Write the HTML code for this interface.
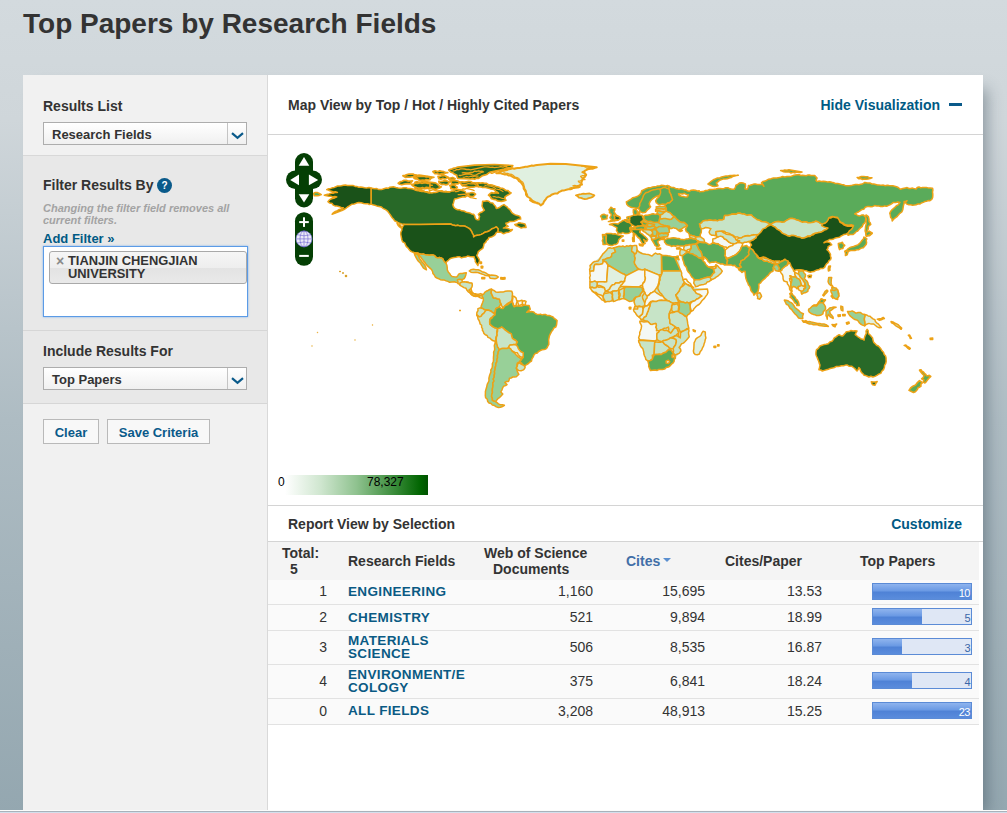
<!DOCTYPE html>
<html lang="en">
<head>
<meta charset="utf-8">
<title>Top Papers by Research Fields</title>
<style>
*{box-sizing:border-box;margin:0;padding:0}
html,body{width:1007px;height:813px;overflow:hidden}
body{font-family:"Liberation Sans",Arial,sans-serif;color:#333;position:relative;
background:linear-gradient(180deg,#d3dade 0px,#cfd6da 120px,#aebcc3 420px,#94a7b0 813px)}
.abs{position:absolute}
h1{position:absolute;left:23px;top:8px;font-size:28px;line-height:32px;font-weight:bold;color:#333;white-space:nowrap}
#panel{position:absolute;left:23px;top:75px;width:960px;height:735px;background:#fff;box-shadow:9px 9px 14px -5px rgba(50,70,82,.42)}
#side{position:absolute;left:0;top:0;width:245px;height:735px;background:#f1f1f1;border-right:1px solid #d9d9d9}
.sec{position:absolute;left:0;width:244px}
.lbl{position:absolute;left:20px;font-size:14px;font-weight:bold;color:#333;white-space:nowrap;line-height:16px}
.sel{position:absolute;left:20px;width:204px;height:23px;border:1px solid #adadad;background:linear-gradient(#fff,#f0f0f0);font-size:13px;font-weight:bold;color:#333;line-height:23px;padding-left:8px;white-space:nowrap}
.sel i{position:absolute;right:0;top:0;width:19px;height:21px;border-left:1px solid #c4c4c4}
.sel svg{position:absolute;right:2px;top:9px}
.btn{position:absolute;height:25px;border:1px solid #b9b9b9;background:#f8f8f8;font-size:13px;font-weight:bold;color:#0a5a8a;text-align:center;line-height:25px;white-space:nowrap}
.link{color:#005a84;font-weight:bold}
#bottomline{position:absolute;left:0;top:810px;width:1007px;height:1px;background:#fcfcfc}
#bottomstrip{position:absolute;left:0;top:811px;width:1007px;height:2px;background:linear-gradient(#a9b2ba 0,#a9b2ba 1px,#d3dfec 1px,#d3dfec 2px)}
.hl{position:absolute;height:1px;background:#d4d4d4}
.th{position:absolute;font-size:14px;font-weight:bold;color:#333;line-height:16px;white-space:nowrap}
.td{position:absolute;font-size:14px;color:#333;line-height:16px;white-space:nowrap}
.fld{position:absolute;font-size:13.5px;font-weight:bold;color:#0a5a84;line-height:13px;white-space:nowrap;letter-spacing:.35px}
.bar{position:absolute;width:100px;height:17px;border:1px solid #5b8bd6;background:#dfe7f5}
.bar b{position:absolute;left:0;top:0;height:100%;background:linear-gradient(#8fb4ee 0%,#6b9ae4 45%,#4f82d6 55%,#5a8cdc 100%)}
.bar span{position:absolute;right:1px;top:3px;font-size:11px;line-height:12px;letter-spacing:-.5px}
</style>
</head>
<body>
<h1>Top Papers by Research Fields</h1>
<div id="panel">
  <div id="side">
    <div class="sec" style="top:0;height:81px;background:#f1f1f1;border-bottom:1px solid #d8d8d8"></div>
    <div class="sec" style="top:81px;height:175px;background:#e8e8e8;border-bottom:1px solid #d6d6d6"></div>
    <div class="sec" style="top:256px;height:73px;background:#e8e8e8;border-bottom:1px solid #d6d6d6"></div>
    <div class="lbl" style="top:23px">Results List</div>
    <div class="sel" style="top:47px">Research Fields<i></i><svg width="13" height="8" viewBox="0 0 13 8"><path d="M1 1.2 L6.5 5.8 L12 1.2" fill="none" stroke="#0a5a8a" stroke-width="2.2"/></svg></div>
    <div class="lbl" style="top:102px">Filter Results By</div>
    <div class="abs" style="left:134px;top:103px;width:15px;height:15px;border-radius:50%;background:#0a5a8a;color:#fff;font-size:10px;font-weight:bold;text-align:center;line-height:15px">?</div>
    <div class="abs" style="left:20px;top:127px;font-size:11px;line-height:12px;font-style:italic;font-weight:bold;color:#a3a3a3;white-space:nowrap">Changing the filter field removes all<br>current filters.</div>
    <div class="lbl link" style="top:156px;font-size:13px">Add Filter »</div>
    <div class="abs" style="left:20px;top:171px;width:205px;height:71px;border:1px solid #5b9be6;background:#fff;box-shadow:0 0 2px #7db0ee"></div>
    <div class="abs" style="left:26px;top:176px;width:198px;height:33px;border:1px solid #a9a9a9;border-radius:3px;background:linear-gradient(#f6f6f6 0%,#eeeeee 50%,#e3e3e3 52%,#e9e9e9 100%)">
      <span class="abs" style="left:6px;top:2.5px;font-size:14px;font-weight:bold;color:#8a8a8a;line-height:13px">×</span>
      <span class="abs" style="left:18px;top:2px;font-size:12.9px;font-weight:bold;color:#333;line-height:13px;white-space:nowrap">TIANJIN CHENGJIAN<br>UNIVERSITY</span>
    </div>
    <div class="lbl" style="top:268px">Include Results For</div>
    <div class="sel" style="top:292px">Top Papers<i></i><svg width="13" height="8" viewBox="0 0 13 8"><path d="M1 1.2 L6.5 5.8 L12 1.2" fill="none" stroke="#0a5a8a" stroke-width="2.2"/></svg></div>
    <div class="btn" style="left:20px;top:344px;width:56px">Clear</div>
    <div class="btn" style="left:84px;top:344px;width:103px">Save Criteria</div>
  </div>
  <div id="main" class="abs" style="left:245px;top:0;width:715px;height:735px">
    <div class="lbl" style="left:20px;top:22px">Map View by Top / Hot / Highly Cited Papers</div>
    <div class="lbl link" style="left:auto;right:43px;top:22px">Hide Visualization</div>
    <div class="abs" style="left:681px;top:28px;width:13px;height:3px;background:#0a5a8a"></div>
    <div class="hl" style="left:0;top:59px;width:715px"></div>
    <div id="map" class="abs" style="left:0;top:60px;width:715px;height:370px"><!--MAP--><svg width="715" height="370" viewBox="0 0 715 370" style="position:absolute;left:0;top:0"><g stroke="#eda216" stroke-width="1.5" stroke-linejoin="round">
<polygon fill="#98d098" stroke="none" points="375.7,81.2 391.6,80.2 398.3,76.2 406.5,81.7 417.4,88.6 419.4,90.6 415.4,92.6 411.4,94.4 408.5,93.6 405.5,92.6 401.5,93.6 401.3,97.1 400.5,99.1 399.5,101.7 395.6,103.0 391.6,104.5 389.6,106.5 390.6,110.0 388.6,111.0 386.1,108.5 383.6,104.5 378.7,98.6 373.7,94.6 371.7,91.1 374.7,89.1 372.7,86.6 375.2,84.2"/>
<polygon fill="#c7e4c7" stroke="none" points="322.0,130.6 333.9,120.5 339.9,113.3 345.8,112.8 353.0,111.6 364.3,111.0 368.5,110.4 369.1,115.1 378.0,119.3 384.0,121.1 387.5,118.1 393.5,119.9 404.2,121.7 410.2,121.1 412.8,136.0 415.0,144.3 418.5,144.3 425.7,152.7 439.4,153.9 440.0,157.4 436.4,163.4 429.2,170.5 423.3,176.5 418.5,181.9 419.7,188.4 420.9,193.2 420.6,193.9 421.2,201.7 413.5,208.8 411.1,218.4 407.5,223.1 400.4,232.1 387.3,235.1 382.5,235.6 380.1,226.1 374.8,213.6 370.6,205.3 370.6,202.9 373.6,191.0 371.8,186.2 373.2,184.8 367.3,177.7 365.5,174.7 367.3,171.1 364.9,165.8 355.4,163.4 345.2,166.4 337.5,167.0 332.7,163.4 324.4,156.2 322.0,152.7"/>
<polygon fill="#e0f0e0" stroke-width="2.0" points="234.2,38.8 236.3,39.4 238.5,39.2 240.4,40.5 242.6,40.6 244.3,41.7 246.0,42.7 248.1,43.1 249.7,44.2 250.7,45.8 252.2,46.8 253.4,48.1 254.5,49.6 255.5,51.5 255.7,53.7 256.9,55.5 257.9,57.4 258.0,59.7 259.2,61.5 260.9,62.5 262.5,63.5 263.7,65.0 265.2,66.2 267.2,67.2 269.1,68.3 271.2,68.9 269.4,67.8 267.5,67.4 265.6,66.8 264.0,65.5 262.0,65.1 264.4,66.8 266.7,67.6 269.1,68.0 271.2,68.8 272.7,70.4 275.1,68.6 276.0,66.5 277.5,64.7 278.7,62.7 280.2,61.6 282.1,61.0 283.5,59.7 285.4,59.0 287.3,58.4 289.4,58.5 290.8,57.2 292.5,56.4 294.2,55.5 296.3,55.4 298.3,54.8 300.4,54.3 302.5,54.3 304.4,53.5 306.1,52.4 308.3,52.3 310.1,51.4 312.0,50.8 313.3,49.0 313.6,46.8 314.4,44.8 315.2,42.9 317.0,41.8 318.0,40.0 316.5,38.2 314.4,37.1 316.1,36.4 317.6,35.4 319.2,34.7 321.0,33.9 323.0,33.8 325.0,33.7 326.9,32.9 328.7,32.3 312.0,30.5 297.8,29.1 282.3,28.7 269.1,29.9 267.4,30.2 265.6,30.7 263.7,30.5 262.0,31.1 259.2,31.7 257.3,31.8 255.4,32.2 253.6,32.6 251.7,32.9 249.7,32.9 247.9,33.2 246.2,33.8 244.3,33.2 242.6,34.1 240.7,34.2 238.9,34.7 237.1,35.1 235.4,35.8 233.5,35.9 231.9,37.2 230.2,38.0 228.3,38.2 230.3,38.2 232.3,38.1"/>
<polyline fill="none" stroke-width="1.3" points="315.0,36.4 317.0,37.9 318.6,39.8 316.6,40.4 314.6,40.6 312.6,41.4 313.8,42.9 315.6,43.6 317.0,44.6 314.7,44.6 312.6,45.9 310.3,46.2 311.4,47.7 313.4,48.2 314.4,49.8 312.5,49.6 310.6,50.4 308.8,50.8 306.8,50.5 304.9,50.8 306.7,51.0 308.5,51.2 310.2,51.9 312.0,52.2 310.0,52.9 307.8,52.8 305.7,53.4 303.4,52.7 301.3,53.4"/>
<polyline fill="none" stroke-width="1.2" points="313.2,31.1 315.5,30.9 317.5,32.2 319.7,32.1 321.9,32.1 324.0,32.9 322.0,33.1 320.0,33.6 318.0,34.1"/>
<polyline fill="none" stroke-width="1.2" points="235.4,37.6 237.5,38.1 239.6,38.3 241.6,39.2 243.8,39.4 245.5,40.6 247.1,42.0 249.1,42.6 250.9,43.6 252.0,45.0 253.4,46.2 254.8,47.3 255.7,49.0 256.1,51.3 256.8,53.5 258.1,55.5 258.2,57.4 259.2,59.1 259.9,60.9"/>
<polygon fill="#c7e4c7" stroke-width="1.8" points="307.9,60.3 309.7,60.0 311.4,59.3 313.2,59.1 315.3,58.7 317.4,58.9 319.5,58.7 321.6,58.5 323.2,59.0 324.7,59.7 326.4,60.3 324.8,61.9 322.8,62.7 320.8,63.2 318.8,63.8 316.8,64.1 314.9,63.6 312.9,62.8 310.9,62.7 309.6,61.2"/>
<polygon fill="#286928" points="103.0,53.0 104.9,53.4 106.8,53.8 108.7,53.6 111.0,54.6 113.5,54.6 115.9,53.7 118.3,53.1 120.2,53.3 121.8,52.2 123.6,51.9 125.4,51.8 127.8,52.5 130.2,53.0 132.2,53.3 134.2,53.1 136.1,52.7 138.2,52.7 140.1,53.6 142.1,53.6 143.9,53.8 145.7,54.3 147.4,55.1 149.2,55.4 151.0,55.9 152.8,56.2 154.7,55.7 156.4,56.2 154.2,56.6 152.0,56.1 153.8,56.5 155.6,56.4 157.3,56.8 159.1,56.7 161.5,57.5 163.9,57.9 165.7,57.5 167.6,57.5 169.4,57.1 171.1,56.1 173.1,56.5 175.2,56.8 177.3,57.0 179.4,56.7 181.5,57.0 183.4,56.1 185.4,56.1 187.8,54.3 190.1,54.6 192.5,54.9 194.1,55.6 195.8,55.9 197.3,56.7 198.1,58.5 199.7,59.7 198.5,61.0 197.3,62.1 195.2,61.8 193.3,62.3 191.3,62.7 189.0,63.5 186.6,63.9 186.0,65.9 185.5,67.9 184.8,69.8 185.4,71.5 186.3,72.9 187.8,74.0 189.7,74.8 191.8,74.8 193.7,75.8 195.8,75.9 197.7,77.0 199.7,77.6 201.7,77.9 203.6,78.9 205.6,79.3 206.7,80.8 207.1,82.6 208.0,84.1 209.4,84.8 211.0,84.7 210.9,83.2 211.6,81.7 210.4,79.3 212.0,77.8 214.0,77.0 216.4,75.2 215.0,73.2 214.0,71.0 214.4,68.6 214.6,66.2 216.7,66.3 218.7,65.7 220.8,66.2 222.5,67.7 224.7,68.0 226.0,69.7 227.5,71.3 228.3,73.4 230.1,73.0 231.8,72.2 233.8,70.7 236.0,69.6 237.5,70.8 239.1,71.8 240.2,73.4 241.8,74.4 242.8,76.0 243.8,77.6 245.5,78.8 247.3,79.9 249.4,80.5 251.5,81.1 252.5,82.5 252.7,84.1 250.5,84.2 248.5,85.3 246.2,86.2 243.8,86.5 241.6,86.6 239.8,87.8 237.8,88.3 238.6,90.1 240.2,91.3 238.4,91.4 236.9,92.3 235.4,93.1 237.3,92.9 239.1,93.2 240.8,93.9 242.5,94.8 244.4,94.6 242.8,96.2 240.8,97.2 238.3,97.5 236.0,98.7 234.4,98.2 233.0,97.2 230.1,97.2 229.9,95.4 230.1,93.7 228.3,91.9 225.9,93.1 224.1,93.7 222.6,94.8 221.1,96.0 219.1,96.7 217.0,97.2 215.2,98.4 213.3,99.4 211.3,100.0 209.2,100.2 207.2,100.7 205.6,102.0 205.5,100.1 204.4,98.4 203.5,96.2 202.1,94.2 200.6,93.1 198.9,92.2 197.3,91.3 195.4,91.0 193.5,90.9 191.6,90.9 189.7,90.3 187.8,90.7 186.1,90.2 184.5,90.0 183.0,89.1 152.0,89.5 136.1,89.3 133.7,88.9 131.4,88.2 129.8,87.4 128.2,86.5 126.6,85.8 125.6,84.1 124.1,82.7 123.0,81.0 122.0,79.4 120.8,77.9 119.8,76.3 118.3,75.1 116.6,74.2 114.9,73.3 113.5,72.1 111.1,71.5 108.7,70.9 106.8,70.2 104.9,69.7 103.0,69.1"/>
<polygon fill="#286928" points="246.7,89.5 249.0,89.0 250.9,87.7 252.9,88.1 254.9,88.4 256.9,88.9 257.6,90.6 258.1,92.5 255.6,92.2 253.3,93.1 251.5,92.1 249.7,91.3 248.0,90.8"/>
<polygon fill="#286928" stroke-width="1.7" points="180.8,35.1 182.5,34.3 184.3,33.9 186.1,33.1 187.9,32.8 189.7,32.1 206.6,30.1 226.4,29.5 244.8,30.5 243.9,32.0 242.3,32.9 240.3,32.9 238.3,33.2 236.4,34.1 222.5,37.1 220.5,38.1 218.7,39.5 216.5,40.1 214.3,40.8 212.4,42.1 210.6,43.4 208.5,43.2 206.6,44.2 204.6,43.6 202.6,44.0 189.7,43.4 189.1,41.8 188.7,40.1 186.6,39.3 184.9,37.8 182.8,37.1"/>
<polyline fill="none" stroke-width="1.3" points="184.7,35.9 186.7,35.6 188.6,34.7 190.7,34.7 192.6,33.9 194.7,33.9 196.7,34.0 198.6,34.5 200.7,34.3 202.6,34.9 216.5,31.9 218.5,31.9 220.5,32.0 222.5,32.4 224.5,32.2 226.4,32.6 228.4,32.4 230.6,32.2 232.8,31.7 235.0,32.2 237.1,31.4 239.4,31.7"/>
<polyline fill="none" stroke-width="1.3" points="190.7,40.4 192.7,40.5 194.7,39.8 196.6,39.3 198.6,39.0 200.6,38.9 202.7,39.1 204.5,40.2 206.6,40.4 208.4,39.8 210.1,38.7 211.9,38.2 213.6,37.3 215.5,36.9 213.9,36.2 212.2,36.3 210.6,35.9 208.6,36.5 206.5,36.1 204.7,37.5 202.6,37.4 200.4,38.0 198.2,37.9 195.9,37.6 193.7,37.9"/>
<polyline fill="none" stroke-width="1.1" points="194.7,42.3 196.7,42.1 198.6,41.4 200.7,42.0 202.6,41.3 204.6,41.7 206.6,41.2 208.6,41.0 210.6,41.3"/>
<polyline fill="none" stroke-width="1.2" points="222.5,38.4 224.5,38.3 226.4,37.4 228.4,36.9 230.5,37.0 232.4,36.4 234.3,36.0 236.2,35.8 238.1,35.6 239.9,34.9"/>
<polygon fill="#286928" stroke-width="1.7" points="147.0,41.1 149.0,40.5 150.9,40.2 153.0,40.4 165.9,42.3 163.7,42.9 161.9,44.3 159.7,44.2 157.5,44.7 155.3,44.3 153.2,44.6 151.0,44.6 149.1,43.8 147.0,43.8"/>
<polygon fill="#286928" stroke-width="1.7" points="164.9,36.6 167.1,35.8 169.6,36.6 171.8,35.9 173.8,36.3 175.8,36.7 177.7,37.5 179.8,37.7 177.6,38.0 175.8,39.1 173.6,38.8 171.3,39.3 169.1,38.6 166.9,38.7"/>
<polygon fill="#286928" stroke-width="1.7" points="170.0,41.3 172.3,41.3 174.5,40.5 176.8,40.7 178.6,41.4 180.3,42.3 178.6,43.4 176.8,44.0 174.8,43.4 172.8,44.2 170.8,43.6"/>
<polygon fill="#286928" stroke-width="1.6" points="180.3,43.0 182.5,43.1 184.7,42.4 187.2,43.6 185.9,44.6 184.2,44.6 182.5,44.9 180.8,44.3"/>
<polygon fill="#286928" stroke-width="1.7" points="170.8,46.3 172.9,46.5 174.8,46.1 176.8,45.6 179.2,46.0 181.3,47.3 179.8,49.4 177.8,49.9 175.8,49.2 173.8,49.6 171.3,48.3"/>
<polygon fill="#286928" stroke-width="1.7" points="147.0,47.3 148.9,46.6 151.0,47.3 153.0,46.9 154.9,46.3 166.9,47.8 168.6,48.6 170.1,49.8 171.4,51.2 173.3,51.8 171.8,52.9 170.1,53.5 168.4,54.3 166.5,54.1 164.6,53.4 162.7,53.5 160.8,53.2 158.9,53.3 156.9,53.6 154.9,53.7 153.0,54.2 151.0,54.3 148.9,54.0 147.0,53.3 147.0,51.3 146.6,49.3"/>
<polyline fill="none" stroke-width="1.2" points="148.0,50.8 149.9,51.5 152.0,51.3 153.9,51.8 155.9,51.6 157.6,50.8 159.6,51.4 161.2,50.3 163.0,50.1 164.9,50.3"/>
<polygon fill="#286928" stroke-width="1.7" points="181.8,46.0 183.7,45.8 185.7,45.5 187.7,45.6 189.9,46.1 191.9,47.3 189.7,49.0 187.7,48.8 185.7,49.4 183.7,48.8 183.0,47.2"/>
<polygon fill="#286928" stroke-width="1.7" points="181.8,50.3 184.2,49.9 186.7,49.8 187.7,51.3 189.2,52.3 188.1,53.4 186.7,54.3 184.7,53.9 182.8,53.6 182.7,51.8"/>
<polygon fill="#286928" stroke-width="1.7" points="191.7,47.0 193.9,46.8 196.2,47.2 198.4,46.8 200.6,46.4 202.7,46.5 204.5,47.7 206.5,47.8 208.6,48.0 210.6,48.3 211.0,49.9 210.6,51.6 208.6,51.3 206.6,51.8 204.6,52.2 202.6,52.0 200.6,52.1 198.7,51.4 196.7,51.0 194.7,51.0 193.1,49.1"/>
<polyline fill="none" stroke-width="1.2" points="193.7,49.3 195.9,49.3 198.2,49.4 200.4,48.5 202.6,48.8 204.4,48.9 206.2,48.8 207.8,50.0 209.6,49.8"/>
<polygon fill="#286928" stroke-width="1.7" points="208.6,48.0 210.6,47.8 212.5,48.1 214.5,47.8 216.5,48.3 218.6,48.4 220.4,49.7 222.5,49.9 224.5,50.2 226.4,50.8 228.4,51.7 230.5,52.0 232.3,53.1 234.4,53.4 236.4,54.3 237.9,55.5 240.0,55.7 241.4,57.1 243.1,57.9 241.3,59.2 239.4,60.2 238.0,61.1 236.9,62.2 236.9,63.8 237.9,65.2 235.8,65.9 233.6,66.3 231.4,66.2 229.4,65.8 227.5,64.6 225.5,64.3 223.5,63.7 222.3,61.7 220.5,60.2 221.9,58.8 223.5,57.7 225.8,58.1 228.1,57.6 230.4,58.2 229.1,57.0 227.5,56.2 226.4,54.8 224.5,54.1 222.5,53.8 220.5,53.3 218.5,52.8 216.6,52.2 214.5,52.5 212.6,51.8 210.6,51.6 209.7,49.7"/>
<polyline fill="none" stroke-width="1.1" points="216.5,50.3 218.5,50.8 220.6,51.0 222.6,51.3 224.6,51.8 226.4,52.8 228.0,54.0 230.0,54.4 232.0,54.7 233.7,55.8 235.4,56.7"/>
<polyline fill="none" stroke-width="1.1" points="224.5,61.7 226.5,61.5 228.4,62.3 230.5,62.0 232.4,62.7 234.3,63.4 236.4,63.7"/>
<polygon fill="#286928" stroke-width="1.6" points="199.6,58.2 201.9,58.0 204.1,57.5 206.0,58.0 207.6,59.2 205.6,61.2 203.3,61.5 201.1,60.9 200.8,59.3"/>
<polyline fill="none" stroke-width="1.3" points="186.7,56.7 188.6,56.6 190.3,56.2 191.9,55.1 193.7,54.8 195.2,53.9 197.1,54.1 198.6,53.3 200.6,53.8 202.6,54.3 204.6,54.9 206.6,55.8"/>
<polyline fill="none" stroke-width="1.3" points="189.7,59.7 192.0,59.7 194.3,59.4 196.6,59.2 198.5,60.6 200.7,61.4 202.6,62.7 204.6,62.8 206.6,63.3 208.6,63.7"/>
<polyline fill="none" stroke-width="1.2" points="147.0,55.0 148.9,55.7 151.0,55.3 153.0,55.4 154.9,55.8 156.6,56.6 158.3,57.3 160.1,57.9 161.9,58.2 161.8,56.4 160.9,54.8 163.0,55.4 165.3,54.6 167.4,55.7 169.6,55.8 171.8,55.8 173.9,55.6 175.8,56.6 177.8,56.0 179.8,56.9 181.8,56.9"/>
<polygon fill="#286928" points="129.0,88.2 130.7,89.4 132.6,90.3 133.3,92.0 134.7,93.2 133.0,93.0 131.6,92.0 130.0,90.3"/>
<polygon fill="#286928" stroke-width="1.7" points="134.9,40.7 137.1,40.4 139.1,39.6 141.1,39.0 143.3,39.1 145.1,39.1 146.8,39.9 148.6,40.2 146.9,40.9 145.2,41.6 143.3,41.9 141.3,42.1 139.3,42.1 137.3,42.3"/>
<polygon fill="#286928" stroke-width="1.7" points="130.2,48.2 132.0,46.9 134.2,46.3 136.1,45.3 138.2,45.4 140.3,46.1 142.4,46.0 144.5,45.8 143.3,47.3 142.1,48.8 140.0,48.7 137.9,48.8 135.8,49.2 133.8,49.8 131.8,49.3"/>
<polygon fill="#286928" stroke-width="1.7" points="145.7,42.9 147.8,42.5 149.8,41.7 151.9,41.5 154.0,41.1 156.0,41.3 158.0,41.9 160.0,41.7 162.0,42.3 162.0,44.7 160.2,45.0 158.3,44.6 156.5,45.3 154.7,45.2 152.8,45.3 150.9,45.0 149.3,43.8 147.6,43.2"/>
<polygon fill="#286928" stroke-width="1.7" points="143.3,49.4 145.4,49.3 147.4,48.2 149.6,48.5 151.6,47.6 153.7,48.3 155.8,47.9 157.9,47.9 160.0,48.3 162.0,48.8 161.9,50.7 162.0,52.7 160.2,52.5 158.3,52.3 156.5,53.4 154.6,52.5 152.8,53.0 150.7,53.1 148.8,52.6 146.9,51.8 144.9,50.9"/>
<polygon fill="#1a5219" points="136.1,89.3 152.0,89.5 183.0,89.1 184.5,90.0 186.1,90.2 187.8,90.7 189.7,90.3 191.6,90.9 193.5,90.9 195.4,91.0 197.3,91.3 198.9,92.2 200.6,93.1 202.1,94.2 203.5,96.2 204.4,98.4 205.5,100.1 205.6,102.0 207.2,100.7 209.2,100.2 211.3,100.0 213.3,99.4 215.2,98.4 217.0,97.2 219.1,96.7 221.1,96.0 222.6,94.8 224.1,93.7 225.9,93.1 228.3,91.9 230.1,93.7 229.9,95.4 230.1,97.2 229.9,96.7 228.1,97.9 227.2,99.6 225.7,100.8 224.2,101.7 222.5,102.2 220.9,102.6 220.1,104.4 218.5,105.6 217.7,107.4 216.1,108.6 215.6,111.0 214.9,113.4 213.2,114.4 211.6,115.6 210.2,116.9 209.8,118.7 208.8,120.3 209.9,122.2 211.1,124.1 211.6,126.2 210.4,128.3 209.9,130.6 208.6,128.7 207.3,126.7 207.3,125.0 206.5,123.4 206.1,121.7 204.2,121.7 201.8,121.6 199.5,121.1 197.6,122.1 195.4,122.2 193.5,122.9 191.9,121.8 189.9,121.7 187.9,122.2 186.0,122.5 184.0,122.9 182.0,123.8 180.4,125.3 178.8,126.5 178.0,128.3 176.7,127.1 175.6,125.6 174.8,123.9 173.2,122.9 171.5,122.6 169.7,122.9 167.9,122.2 166.7,120.6 164.9,119.9 163.1,119.9 161.3,120.3 159.5,120.1 157.8,119.9 155.6,119.1 153.4,119.2 151.2,118.7 149.5,118.0 147.6,117.9 145.8,117.5 144.0,116.9 142.4,116.0 141.1,114.6 139.9,112.9 138.4,111.6 137.5,109.8 136.7,107.9 134.7,106.9 133.9,105.0 133.5,103.0 133.1,101.1 132.7,99.1 132.9,97.0 133.8,95.2 133.9,93.1 134.9,91.1 136.3,89.3"/>
<polygon fill="#1a5219" points="103.0,53.0 100.9,52.5 98.7,52.9 96.5,52.8 94.4,52.2 92.7,51.9 90.8,52.3 89.1,51.6 87.3,51.4 85.4,50.6 83.3,50.6 81.3,50.6 79.3,50.4 77.4,50.0 75.4,50.3 73.4,50.8 71.4,51.1 69.4,51.0 67.9,51.8 66.3,52.4 64.6,52.7 62.7,53.4 60.6,53.7 58.7,54.6 60.3,55.1 61.8,55.8 63.4,56.2 65.4,57.0 67.5,56.7 69.4,57.4 67.3,57.4 65.2,58.2 63.1,58.3 61.1,59.0 58.7,59.6 56.3,60.2 58.7,60.8 61.1,61.3 63.0,61.3 64.9,62.1 66.9,61.6 68.8,61.9 66.7,62.9 64.4,63.5 62.3,64.3 61.0,65.4 59.9,66.7 61.7,68.1 64.1,68.5 65.2,70.1 67.0,70.9 68.8,71.1 70.6,71.4 72.4,72.1 73.8,72.8 75.4,72.7 73.6,74.1 71.3,74.5 69.4,75.7 67.4,76.5 65.6,77.6 64.1,79.2 66.0,78.6 68.0,77.9 69.9,77.1 71.8,76.2 73.9,75.5 75.9,74.5 77.8,73.3 79.5,72.0 81.3,70.9 83.7,69.3 86.2,69.0 88.5,68.1 90.8,67.6 93.2,67.7 95.6,68.5 98.0,68.8 99.7,68.7 101.3,69.5 103.0,69.1"/>
<polygon fill="#5aab5a" points="45.6,58.4 47.2,57.5 49.1,57.4 51.3,58.4 53.3,59.6 51.3,60.4 49.1,60.8 46.2,60.8"/>
<polygon fill="#98d098" points="145.8,117.5 147.6,117.9 149.5,118.0 151.2,118.7 153.4,119.2 155.6,119.1 157.8,119.9 159.5,120.1 161.3,120.3 163.1,119.9 164.9,119.9 166.7,120.6 167.9,122.2 169.7,122.9 171.5,122.6 173.2,122.9 174.8,123.9 175.6,125.6 176.7,127.1 178.0,128.3 178.9,130.3 179.2,132.4 179.3,134.9 180.4,137.2 181.7,138.5 182.6,140.2 184.0,141.4 186.3,141.8 188.7,142.0 189.8,140.6 190.7,139.2 192.3,138.4 194.3,138.5 196.3,138.0 198.3,137.8 197.8,139.9 197.1,142.0 196.2,143.5 194.7,144.4 192.3,144.9 190.9,146.3 189.9,147.9 188.1,147.4 186.4,146.7 183.9,146.9 181.6,147.3 179.9,146.4 178.1,145.9 176.4,145.1 174.4,144.9 172.4,144.7 170.7,143.7 168.9,143.0 167.3,142.0 166.3,140.1 164.9,138.4 164.6,136.6 163.8,135.0 162.5,133.6 160.9,132.1 159.2,130.6 157.8,128.9 156.7,127.2 155.3,125.7 154.2,124.1 153.1,122.6 151.9,121.2 150.6,119.9 149.3,118.6 147.3,118.6"/>
<polygon fill="#98d098" points="146.4,118.1 147.8,119.0 149.4,119.3 150.7,121.2 151.5,123.5 153.0,125.3 154.1,127.1 155.8,128.6 156.9,130.4 157.8,132.4 158.4,134.8 156.7,133.9 155.3,132.8 154.2,131.2 153.1,129.5 152.2,127.8 150.6,126.5 149.5,125.0 148.5,123.4 147.6,121.7 146.7,120.0"/>
<polygon fill="#c7e4c7" points="189.3,144.9 191.4,144.3 193.5,144.4 194.2,145.8 194.7,147.3 194.1,148.8 193.5,150.3 191.7,149.4 189.9,148.5 190.0,146.7"/>
<polygon fill="#e0f0e0" points="194.7,147.3 196.7,147.8 198.7,146.9 200.6,147.3 202.4,148.3 204.2,149.1 203.4,151.5 203.0,153.9 203.6,155.7 204.2,157.5 202.3,157.1 200.6,156.3 199.1,154.7 198.3,152.7 196.8,151.6 195.1,151.1 193.5,150.3 194.1,148.8"/>
<polygon fill="#c7e4c7" points="204.2,157.5 205.7,158.4 207.3,158.8 209.0,159.2 210.8,159.2 212.6,158.6 214.6,159.4 216.1,161.0 215.2,162.5 213.8,163.4 211.7,162.6 210.2,161.0 207.8,161.4 205.4,161.0 203.6,159.7 202.0,158.0 200.6,156.3 202.3,157.1"/>
<polygon fill="#c7e4c7" points="201.2,136.0 203.1,134.7 205.4,134.2 207.8,134.7 210.2,134.8 212.2,135.5 214.0,136.7 216.1,137.2 218.1,138.2 220.0,139.5 222.1,140.2 219.7,140.8 217.6,140.6 215.8,139.6 213.8,139.0 211.8,138.3 209.9,137.5 207.8,137.2 205.4,137.6 203.0,137.2"/>
<polygon fill="#c7e4c7" points="220.9,140.8 223.2,140.1 225.7,140.2 227.4,140.4 229.0,141.0 230.4,142.0 228.8,143.2 226.9,143.8 224.5,143.4 222.1,143.2"/>
<polygon fill="#c7e4c7" points="232.8,142.6 234.9,142.8 237.0,142.6 237.0,143.9 234.9,144.3 232.8,143.9"/>
<polygon fill="#c7e4c7" points="213.8,142.6 216.7,142.6 216.7,143.8 213.8,143.8"/>
<polygon fill="#c7e4c7" points="212.0,127.1 213.5,127.1 213.5,128.6 212.0,128.6"/>
<polygon fill="#c7e4c7" points="213.2,131.2 214.7,131.2 214.7,133.0 213.2,133.0"/>
<polygon fill="#1a5219" stroke-width="0.9" points="71.6,136.1 72.4,136.1 72.4,136.9 71.6,136.9"/>
<polygon fill="#1a5219" stroke-width="0.9" points="74.6,137.6 75.4,137.6 75.4,138.4 74.6,138.4"/>
<polygon fill="#1a5219" stroke-width="1.0" points="77.3,140.3 78.7,140.3 78.7,141.7 77.3,141.7"/>
<polygon fill="#c7e4c7" stroke-width="0.7" points="49.2,197.2 49.8,197.2 49.8,197.8 49.2,197.8"/>
<polygon fill="#c7e4c7" stroke-width="0.7" points="104.2,189.7 104.8,189.7 104.8,190.3 104.2,190.3"/>
<polygon fill="#c7e4c7" stroke-width="0.6" points="86.7,204.7 87.3,204.7 87.3,205.3 86.7,205.3"/>
<polygon fill="#c7e4c7" stroke-width="0.9" points="191.5,175.0 192.5,175.0 192.5,176.0 191.5,176.0"/>
<polygon fill="#c7e4c7" stroke-width="0.6" points="43.7,210.7 44.3,210.7 44.3,211.3 43.7,211.3"/>
<polygon fill="#98d098" points="214.1,159.9 215.7,159.1 216.7,157.4 218.2,156.3 220.0,155.5 221.7,154.5 223.6,153.9 223.4,156.0 223.0,158.1 224.1,159.5 224.5,161.3 225.4,162.9 227.4,163.0 229.3,163.8 231.3,164.1 232.0,165.6 232.1,167.4 233.1,168.8 232.0,170.2 231.3,171.8 229.6,172.8 227.8,173.6 227.3,175.6 226.9,177.5 227.1,179.6 226.0,178.1 224.0,177.6 223.0,176.0 220.6,175.2 218.2,174.8 216.3,174.7 214.7,173.5 212.9,173.0 213.2,171.1 213.9,169.4 214.6,167.6 215.4,165.3 215.2,162.9 214.1,161.6"/>
<polygon fill="#c7e4c7" points="223.6,154.5 225.8,155.4 227.8,156.9 230.1,157.3 232.5,156.9 235.0,157.1 237.3,156.3 239.5,156.0 241.7,156.1 243.8,156.3 244.5,158.4 244.4,160.5 244.2,162.5 244.0,164.5 243.2,166.4 240.9,167.6 238.9,168.9 237.3,170.6 236.0,172.0 234.9,173.6 234.6,171.9 233.4,170.5 233.1,168.8 232.1,167.4 232.0,165.6 231.3,164.1 229.3,163.8 227.4,163.0 225.4,162.9 224.7,161.3 224.0,159.7 223.2,158.1 223.3,156.3"/>
<polygon fill="#f4f8f4" points="244.4,161.1 246.4,161.6 248.0,162.9 248.5,164.7 249.2,166.4 248.4,168.5 248.0,170.6 245.6,171.2 245.4,169.0 244.4,167.1 244.5,165.1 244.9,163.1"/>
<polygon fill="#f4f8f4" points="249.2,165.9 251.6,166.0 254.0,165.3 254.7,167.3 254.6,169.4 252.5,170.0 250.4,170.6 250.1,168.2"/>
<polygon fill="#f4f8f4" points="254.6,165.9 256.4,165.7 258.1,166.4 257.4,168.2 257.5,170.0 255.2,170.3 254.3,168.1"/>
<polygon fill="#c7e4c7" points="209.9,173.6 211.3,173.1 212.9,173.0 214.7,173.5 216.3,174.7 218.2,174.8 217.2,176.7 215.8,178.4 214.3,179.4 213.3,181.1 211.7,181.9 210.1,180.8 208.7,179.6 208.9,177.5 210.0,175.7"/>
<polygon fill="#c7e4c7" points="208.7,180.1 210.0,181.3 211.7,181.9 213.3,181.1 214.3,179.4 215.8,178.4 217.0,176.6 218.4,175.0 220.8,175.2 223.0,176.2 224.5,177.3 225.9,178.4 227.1,179.8 225.7,180.7 224.3,181.9 222.8,182.8 221.8,184.3 221.6,186.7 221.8,189.1 223.3,190.4 224.8,191.7 226.6,192.7 228.2,192.9 229.5,193.9 228.8,196.2 228.9,198.6 228.9,200.4 227.9,202.1 227.8,203.9 227.8,205.8 227.4,206.3 225.2,205.8 223.2,204.5 221.9,203.1 220.0,202.4 219.1,200.5 217.3,199.8 215.9,198.4 215.3,196.6 214.3,195.0 214.6,193.9 213.6,192.3 213.6,190.3 212.1,189.0 211.7,187.2 211.1,185.5 210.0,183.8 209.7,181.9"/>
<polygon fill="#5aab5a" points="227.8,173.6 229.6,172.8 231.3,171.8 232.9,173.2 234.9,173.6 236.0,172.0 237.3,170.6 239.5,169.8 241.3,168.3 243.2,167.1 244.4,167.6 245.0,169.9 246.2,171.8 248.2,170.9 250.4,171.0 252.2,171.2 254.0,171.1 255.7,170.0 257.5,170.3 259.3,170.4 261.1,170.6 261.7,172.4 262.3,174.2 260.5,175.6 258.7,177.2 261.1,176.7 263.5,176.6 265.5,176.9 267.0,178.3 268.7,179.2 270.6,179.6 272.4,179.1 274.2,179.9 276.0,179.4 277.8,179.6 279.4,180.6 281.4,180.5 283.2,181.3 285.0,181.9 286.2,183.3 287.7,184.4 289.1,185.5 288.8,187.9 288.5,190.3 287.7,192.1 285.8,193.0 285.0,194.8 283.8,196.2 282.9,197.8 282.1,199.4 281.4,201.0 281.0,203.1 280.6,205.1 280.8,207.3 280.8,209.4 279.9,211.0 279.1,212.7 277.8,214.1 276.0,214.6 274.1,214.8 272.3,215.6 270.6,216.5 269.3,218.0 267.2,218.5 265.9,220.1 265.1,222.1 263.9,223.9 263.5,226.0 261.8,227.1 260.4,228.5 258.7,229.6 256.4,230.8 254.6,229.8 253.5,228.0 251.6,227.2 252.6,225.5 253.7,223.8 255.2,222.5 255.2,220.1 255.2,217.7 253.1,216.9 251.6,215.3 250.3,214.2 249.3,212.8 248.0,211.7 248.3,209.3 249.2,207.0 247.8,205.5 246.1,204.5 244.4,203.4 243.7,201.0 243.2,198.6 241.0,197.9 239.1,196.4 237.3,195.1 235.6,193.5 233.7,192.1 231.7,193.1 229.5,193.9 228.2,192.9 226.6,192.7 224.8,191.7 223.3,190.4 221.8,189.1 221.8,186.7 222.0,184.3 224.0,183.1 225.2,181.1 227.1,179.8 227.0,177.7 227.5,175.7"/>
<polygon fill="#c7e4c7" points="229.5,193.9 231.7,193.1 233.7,192.1 235.6,193.5 237.3,195.1 239.1,196.4 241.0,197.9 243.2,198.6 243.7,201.0 244.4,203.4 246.1,204.5 247.8,205.5 249.2,207.0 248.2,208.3 248.0,209.9 246.0,209.6 244.0,209.9 242.1,209.9 240.8,211.7 239.7,213.5 237.7,213.4 235.7,213.8 233.7,213.5 231.3,215.3 230.4,213.4 229.2,211.5 228.9,209.4 228.6,207.6 228.3,205.8 228.3,204.0 228.4,202.2 229.2,200.2 229.0,198.0 229.6,196.0"/>
<polygon fill="#e0f0e0" points="242.1,209.9 244.0,209.9 246.0,209.6 248.0,209.9 249.6,211.5 250.3,213.6 251.6,215.3 253.1,216.9 255.2,217.7 255.2,220.1 255.2,222.5 253.3,222.1 251.6,221.3 250.3,219.6 249.2,217.7 247.0,217.4 245.1,216.3 243.2,215.3 241.9,214.3 240.9,212.9 241.0,211.2"/>
<polygon fill="#98d098" points="227.4,206.3 228.1,208.5 229.2,210.5 229.5,212.2 230.8,213.5 231.0,215.3 230.2,217.0 230.0,218.8 229.4,220.5 229.6,222.4 229.0,224.5 228.9,226.6 227.9,228.6 227.8,230.8 227.2,232.6 227.1,234.6 226.4,236.4 226.7,238.4 226.2,240.3 226.2,242.2 225.2,244.0 226.0,246.1 224.8,247.9 225.0,249.8 224.9,251.7 224.4,253.6 224.3,255.5 224.5,257.5 223.8,259.4 223.6,261.4 224.4,263.3 224.4,265.3 226.6,266.2 228.7,267.3 230.4,268.9 232.3,269.8 234.4,269.8 236.4,270.3 234.5,271.5 232.5,272.2 230.4,272.5 228.3,271.9 226.5,270.6 224.4,270.1 223.1,268.5 221.0,268.0 219.7,266.5 219.3,264.3 217.6,262.7 217.3,260.5 217.4,258.5 217.4,256.5 217.9,254.6 218.5,252.8 218.9,251.0 219.3,249.1 220.3,247.4 221.0,245.4 220.9,243.2 221.4,241.1 222.1,239.1 222.9,237.1 222.8,234.8 224.1,232.9 224.4,230.8 224.3,228.8 225.1,227.0 225.5,225.1 225.4,223.1 225.6,221.2 225.7,219.1 225.6,217.0 226.6,215.0 226.6,212.9 226.3,210.6 226.9,208.5"/>
<polygon fill="#98d098" points="231.0,215.3 232.3,214.1 234.0,213.5 235.8,213.3 237.6,213.4 239.4,213.4 241.1,212.9 242.8,214.0 243.8,215.9 245.4,217.1 247.0,218.5 248.3,220.0 250.0,221.6 251.8,223.0 254.2,223.6 252.8,225.1 251.4,226.8 249.5,227.8 249.0,229.5 249.1,231.4 248.3,233.1 249.0,235.3 249.7,237.4 250.9,239.3 249.6,240.5 248.3,241.7 246.5,241.9 244.7,242.0 243.1,243.0 241.4,243.3 241.1,244.9 240.5,246.5 238.6,246.5 236.9,247.4 239.0,249.6 237.6,250.5 235.9,251.1 234.8,252.4 234.0,254.8 232.8,257.0 234.8,259.0 233.3,260.8 231.6,262.6 230.1,263.4 229.0,264.7 228.0,266.5 226.2,266.0 224.4,265.3 224.4,263.3 223.6,261.4 223.8,259.4 224.5,257.5 224.3,255.5 224.4,253.6 224.9,251.7 225.0,249.8 224.8,247.9 226.0,246.1 225.2,244.0 226.2,242.2 226.2,240.3 226.7,238.4 226.4,236.4 227.1,234.6 227.2,232.6 227.8,230.8 227.9,228.6 228.9,226.6 229.0,224.5 229.6,222.4 229.4,220.5 230.0,218.8 230.2,217.0"/>
<polygon fill="#c7e4c7" points="249.5,229.0 251.8,227.8 253.4,229.4 255.7,230.2 257.2,231.9 256.6,233.6 255.4,234.9 253.1,235.7 250.6,235.5 249.4,234.4 248.3,233.1 249.3,231.2"/>
<polygon fill="#c7e4c7" points="192.0,148.0 194.3,146.9 196.8,146.8 198.5,147.2 200.3,147.6 202.1,148.1 203.9,148.0 204.3,150.1 203.9,152.1 202.6,153.8 200.9,155.1 202.7,156.4 203.9,158.1 205.5,158.8 207.2,159.4 208.7,160.5 210.5,160.6 212.3,160.6 214.1,159.9 212.4,160.6 211.1,161.7 209.1,161.3 207.1,160.9 205.1,160.5 203.4,159.5 202.2,157.8 200.3,156.9 199.0,155.2 198.0,153.3 195.9,152.6 194.0,151.4 192.0,150.4"/>
<polygon fill="#c7e4c7" points="333.9,120.5 334.9,118.9 336.3,117.6 337.6,116.3 338.8,114.9 339.9,113.3 341.8,112.7 343.9,113.4 345.8,112.8 346.8,114.8 347.6,116.9 345.8,117.8 344.0,118.7 343.7,120.2 343.5,121.7 341.5,122.8 339.3,123.2 337.3,124.2 335.1,124.7 335.2,126.8 334.5,128.8 332.6,129.2 330.7,129.4 328.7,129.2 326.8,129.4 326.1,131.6 325.9,133.8 325.6,136.0 323.7,136.1 322.0,136.6 321.6,134.6 322.4,132.6 322.0,130.6 323.5,129.1 324.9,127.5 326.8,126.4 328.6,126.2 330.3,125.9 331.6,124.1 332.7,122.2"/>
<polygon fill="#98d098" points="347.6,116.9 346.8,114.8 345.8,112.8 347.6,112.3 349.3,111.7 351.1,111.3 353.0,111.6 354.8,111.0 356.8,111.9 358.6,110.8 360.5,111.3 362.4,110.5 364.3,111.0 364.1,112.7 363.8,114.5 363.7,116.3 365.6,117.4 366.7,119.3 366.5,121.2 367.2,123.1 366.9,125.0 366.3,126.9 366.7,128.8 367.9,130.7 369.1,132.7 370.9,134.2 357.8,140.8 356.4,139.3 354.6,138.7 353.0,137.8 339.9,130.0 338.9,128.5 337.9,127.0 336.0,126.3 335.1,124.7 337.3,124.2 339.3,123.2 341.5,122.8 343.5,121.7 343.7,120.2 344.0,118.7 345.8,117.8"/>
<polygon fill="#c7e4c7" points="364.3,111.0 366.4,110.6 368.5,110.4 368.9,112.4 369.1,114.5 368.7,116.7 367.9,118.7 366.7,119.3 365.6,117.4 363.7,116.3 363.8,114.5 364.1,112.7"/>
<polygon fill="#c7e4c7" points="367.9,118.7 368.7,117.0 369.1,115.1 370.4,116.6 372.0,117.5 373.9,118.5 375.9,119.1 378.0,119.3 380.1,119.4 382.1,120.2 384.0,121.1 385.6,119.4 387.5,118.1 389.4,119.2 391.7,118.8 393.5,119.9 393.5,139.6 391.1,140.1 376.8,134.2 375.1,134.9 373.2,134.8 370.9,134.2 369.1,132.7 367.9,130.7 366.7,128.8 366.3,126.9 366.9,125.0 367.2,123.1 366.5,121.2 366.7,119.3"/>
<polygon fill="#5aab5a" points="393.5,120.2 395.7,120.4 397.8,120.4 400.0,120.8 402.1,121.1 404.2,121.7 406.2,121.8 408.2,121.6 410.2,121.1 410.4,123.0 411.1,124.7 408.4,123.5 406.9,122.9 412.8,136.0 394.1,136.0"/>
<polygon fill="#f4f8f4" points="322.0,136.6 323.7,136.1 325.6,136.0 325.9,133.8 326.1,131.6 326.8,129.4 328.7,129.2 330.7,129.4 332.6,129.2 334.5,128.8 335.2,126.8 335.1,124.7 336.0,126.3 337.9,127.0 338.9,128.5 339.9,130.0 338.7,146.7 336.8,147.0 334.9,146.7 332.9,146.8 331.0,146.8 329.1,147.3 326.8,146.1 324.4,146.9 322.0,146.7 322.0,144.7 321.6,142.7 322.3,140.6 321.9,138.6"/>
<polygon fill="#e0f0e0" points="339.9,130.0 353.0,137.8 354.6,138.7 356.4,139.3 357.8,140.8 357.4,142.6 356.9,144.3 356.6,146.1 354.8,146.7 352.9,146.6 351.3,147.9 349.4,147.9 347.6,148.0 346.4,149.6 344.6,149.7 343.4,150.9 342.4,152.3 341.7,153.9 339.8,155.4 337.5,156.2 336.8,154.5 336.3,152.7 334.6,151.7 332.9,151.0 331.1,150.4 329.1,150.3 329.1,147.3 331.0,146.8 332.9,146.8 334.9,146.7 336.8,147.0 338.7,146.7"/>
<polygon fill="#f4f8f4" points="357.8,140.8 370.9,134.2 373.2,134.8 375.1,134.9 376.8,134.2 376.8,136.4 376.8,138.7 376.9,140.9 377.4,143.1 377.1,145.1 376.4,146.9 374.9,148.4 374.4,150.3 372.5,150.8 370.9,152.1 357.8,151.5 355.7,151.4 353.7,151.4 351.8,152.1 350.6,149.7 352.6,148.5 354.7,147.5 356.6,146.1 356.9,144.3 357.4,142.6"/>
<polygon fill="#f4f8f4" points="376.8,134.2 391.1,140.1 391.6,142.3 391.1,144.5 391.1,146.7 390.4,148.7 389.8,150.8 388.7,152.7 387.5,154.4 386.4,156.2 384.5,157.4 382.5,158.3 381.1,160.0 379.2,161.0 377.6,159.5 376.8,157.4 375.8,156.0 375.7,154.2 375.0,152.7 374.4,150.3 374.9,148.4 376.4,146.9 377.1,145.1 377.4,143.1 376.9,140.9 376.8,138.7 376.8,136.4"/>
<polygon fill="#c7e4c7" points="394.1,136.0 412.8,136.0 413.7,138.0 413.6,140.2 414.5,142.2 415.0,144.3 415.8,145.8 417.3,146.7 415.8,147.9 414.7,149.5 413.9,151.3 412.6,152.7 411.9,154.3 411.3,156.0 410.2,157.4 409.2,158.8 407.8,159.8 408.3,161.7 409.0,163.5 409.9,165.2 410.8,167.0 409.1,167.8 407.2,167.8 405.4,168.2 403.4,167.6 401.5,166.3 399.5,165.8 397.8,164.3 396.0,162.8 394.7,161.0 393.7,159.1 391.9,157.7 390.9,155.8 389.9,153.9 389.9,152.0 390.6,150.3 391.3,148.6 391.1,146.7 392.1,145.1 392.0,143.0 392.7,141.3 393.5,139.6 394.2,137.8"/>
<polygon fill="#f4f8f4" points="415.0,144.9 416.7,144.1 418.5,144.3 419.3,146.1 420.8,147.3 422.4,148.5 423.3,150.3 424.3,151.6 425.7,152.7 423.9,151.7 422.1,150.9 420.7,149.7 418.8,149.5 417.3,148.5 416.1,146.7"/>
<polygon fill="#c7e4c7" points="412.6,152.7 414.4,151.5 415.9,150.1 417.3,148.5 419.3,149.6 421.1,150.9 423.3,151.5 424.4,153.3 425.7,155.1 427.1,156.0 427.8,157.7 429.2,158.6 431.0,159.1 432.5,160.0 434.0,161.0 432.1,162.1 430.5,163.5 428.5,164.3 426.9,165.8 424.8,166.3 422.8,167.0 420.9,168.2 419.2,167.3 417.3,168.1 415.6,167.2 413.8,167.0 411.8,166.0 410.2,164.6 409.7,162.8 408.6,161.4 407.8,159.8 409.2,158.8 410.2,157.4 411.3,156.0 411.9,154.3"/>
<polygon fill="#f4f8f4" points="425.7,155.1 439.4,153.9 439.7,155.6 440.0,157.4 439.1,159.6 437.7,161.4 436.4,163.4 434.9,164.8 433.5,166.3 432.4,168.0 431.0,169.5 429.2,170.5 427.6,171.9 426.2,173.4 425.1,175.3 423.3,176.5 422.8,174.1 422.1,171.7 422.1,169.9 422.7,168.2 424.5,166.5 426.9,165.8 428.5,164.3 430.5,163.5 432.1,162.1 434.0,161.0 432.5,160.0 431.0,159.1 429.2,158.6 427.8,157.7 427.1,156.0"/>
<polygon fill="#98d098" points="410.8,167.0 413.8,167.0 415.6,167.2 417.3,168.1 419.2,167.3 420.9,168.2 421.8,169.8 422.1,171.7 422.2,174.1 422.7,176.5 421.7,178.6 419.7,179.9 418.5,181.9 416.7,181.0 415.2,179.6 413.5,178.7 411.7,177.8 410.2,176.5 411.2,174.2 411.4,171.7 411.3,169.3"/>
<polygon fill="#c7e4c7" points="404.2,169.4 406.2,169.4 408.2,169.1 410.2,168.8 410.0,170.3 410.8,171.7 410.4,174.1 410.2,176.5 408.2,176.4 406.2,177.0 404.2,176.5 403.8,174.7 403.6,172.9 403.6,171.1"/>
<polygon fill="#98d098" points="357.1,152.1 370.9,152.1 372.7,152.2 374.4,152.7 374.2,154.5 375.0,156.2 373.6,157.6 372.6,159.1 372.0,161.0 370.0,161.6 367.9,162.2 366.1,163.7 364.9,165.8 363.1,166.3 361.3,166.4 359.4,165.3 357.4,164.2 355.4,163.4 355.7,161.4 356.3,159.5 356.0,157.4 356.1,155.6 356.2,153.7"/>
<polygon fill="#c7e4c7" points="375.0,156.2 376.8,157.4 375.7,159.2 374.4,161.0 374.6,162.9 375.2,164.7 376.1,166.4 376.8,168.2 376.7,169.7 377.4,171.1 375.4,171.1 373.4,171.7 371.3,170.9 369.3,171.6 367.3,171.1 366.7,169.0 366.1,167.0 366.3,165.2 367.1,163.7 367.9,162.2 370.0,161.6 372.0,161.0 372.6,159.1 373.6,157.6"/>
<polygon fill="#f4f8f4" points="376.8,168.2 377.3,166.3 377.8,164.5 379.1,163.0 379.2,161.0 381.1,160.0 382.5,158.3 384.5,157.4 386.4,156.2 388.7,158.0 390.6,159.2 392.5,160.5 394.7,161.0 396.0,162.8 397.8,164.3 399.5,165.8 397.5,165.2 395.5,165.6 393.5,165.2 391.0,165.4 388.7,166.4 386.7,166.5 384.8,166.1 382.8,166.4 381.3,168.0 380.4,169.9 379.0,170.9 377.4,171.1 376.7,169.7"/>
<polygon fill="#c7e4c7" points="382.8,167.0 384.7,166.5 386.7,166.4 388.7,166.4 391.0,165.4 393.5,165.2 395.5,165.6 397.5,165.2 399.5,165.8 401.5,166.3 403.4,167.6 405.4,168.2 404.2,169.4 403.6,171.1 403.6,172.9 402.8,174.9 401.8,176.8 401.2,178.9 401.2,181.0 401.2,183.1 401.9,185.1 401.8,187.2 402.2,188.6 404.3,189.6 406.4,191.0 407.0,193.3 405.3,194.7 404.2,196.5 402.8,198.1 400.4,196.3 400.8,194.2 400.4,192.1 398.4,193.0 396.2,193.2 394.4,194.5 392.9,194.9 391.5,195.7 388.5,195.7 388.6,193.9 387.7,192.2 388.4,190.3 387.9,188.6 386.1,188.8 384.4,189.4 382.5,189.2 381.3,188.0 380.1,186.8 379.2,186.0 377.2,185.7 375.3,185.0 373.2,184.8 375.1,184.0 376.1,182.1 378.0,181.3 378.7,179.3 379.4,177.4 380.3,175.6 380.7,173.6 381.6,171.7 382.2,169.4"/>
<polygon fill="#e0f0e0" points="377.4,171.1 379.0,170.9 380.4,169.9 381.9,168.7 382.8,167.0 382.2,169.4 381.6,171.7 380.7,173.6 380.3,175.6 379.4,177.4 378.7,179.3 378.0,181.3 376.1,182.1 375.1,184.0 373.2,184.8 372.2,183.2 370.9,181.9 372.7,180.4 374.4,178.9 374.7,176.5 375.0,174.1 375.9,172.4"/>
<polygon fill="#e0f0e0" points="366.7,171.7 368.6,171.8 370.6,171.4 372.5,171.8 374.4,171.7 375.0,174.1 374.7,176.5 374.4,178.9 372.7,180.4 370.9,181.9 369.3,180.8 368.2,179.3 367.3,177.7 366.0,176.4 365.5,174.7 366.4,173.3"/>
<polygon fill="#f4f8f4" points="371.8,186.2 373.9,186.5 375.9,186.9 378.0,186.8 380.1,186.8 381.3,188.0 382.5,189.2 384.4,189.4 386.1,188.8 387.9,188.6 388.4,190.3 387.7,192.2 388.6,193.9 388.5,195.7 391.5,195.7 390.6,197.3 389.1,198.1 388.8,200.3 388.9,202.5 389.1,204.7 387.3,205.9 371.8,204.7 370.6,202.9 371.2,201.1 371.8,199.4 371.7,197.5 372.4,195.7 373.2,193.4 373.6,191.0 373.0,189.4 372.0,187.9"/>
<polygon fill="#c7e4c7" points="404.2,177.7 406.2,177.3 408.1,176.4 410.2,176.5 411.7,177.8 413.5,178.7 415.2,179.6 416.7,181.0 418.5,181.9 419.0,184.0 419.4,186.2 419.7,188.4 420.1,190.8 420.9,193.2 420.6,193.3 418.6,193.8 417.0,195.3 415.2,196.3 413.0,196.6 411.1,197.5 410.5,195.9 409.1,194.5 408.7,192.8 406.4,191.0 404.3,189.6 402.2,188.6 401.8,187.2 401.9,185.1 401.2,183.1 401.2,181.0 401.2,178.9 402.6,177.8"/>
<polygon fill="#c7e4c7" points="322.0,146.7 324.4,146.9 326.8,146.1 329.1,147.3 329.1,150.3 328.0,152.7 326.0,153.0 324.0,152.2 322.0,152.7 321.9,150.7 321.9,148.7"/>
<polygon fill="#e0f0e0" points="322.0,152.7 324.0,152.2 326.0,153.0 328.0,152.7 329.1,151.5 330.9,152.2 332.8,151.9 334.5,152.5 336.3,152.7 336.8,154.5 337.5,156.2 336.4,157.7 335.8,159.4 335.1,161.0 333.2,160.9 331.5,159.8 329.4,159.1 328.0,157.4 326.0,157.3 324.4,156.2 323.2,154.5"/>
<polygon fill="#f4f8f4" points="324.4,156.2 326.0,157.3 328.0,157.4 329.4,159.1 331.5,159.8 333.5,160.3 335.1,161.6 335.2,163.6 336.4,165.2 336.9,167.0 335.7,165.5 333.8,164.9 332.7,163.4 331.4,162.2 329.9,161.0 328.5,159.8 327.4,158.4 325.9,157.3"/>
<polygon fill="#c7e4c7" points="336.3,158.6 338.1,158.3 339.9,158.1 341.7,157.4 343.3,158.4 344.6,159.8 344.2,161.8 344.4,163.8 344.0,165.8 341.9,166.4 339.7,166.4 337.5,167.0 336.6,165.2 335.6,163.5 335.1,161.6 335.5,160.0"/>
<polygon fill="#e0f0e0" points="341.7,153.9 342.4,152.3 343.4,150.9 344.6,149.7 346.4,149.6 347.6,148.0 349.4,147.9 351.3,147.9 352.9,146.6 354.8,146.7 356.6,146.1 355.4,147.6 354.3,149.2 352.8,150.4 351.8,152.1 350.8,153.4 350.6,155.1 348.7,155.9 346.6,156.0 344.6,156.2 343.2,157.1 341.7,157.4 339.7,156.5 337.5,156.2 339.8,155.4"/>
<polygon fill="#c7e4c7" points="344.6,156.2 346.6,156.0 348.7,155.9 350.6,155.1 350.6,157.0 350.6,158.9 351.1,160.8 350.6,162.7 351.2,164.6 349.2,165.1 347.3,165.9 345.2,166.4 344.9,164.2 344.4,162.0 344.6,159.8 344.2,158.0"/>
<polygon fill="#c7e4c7" points="351.2,155.1 352.9,154.4 354.4,153.6 356.0,152.7 357.1,152.1 356.2,153.7 356.1,155.6 356.0,157.4 355.9,159.4 355.4,161.4 356.0,163.4 353.8,163.7 351.8,164.6 351.2,162.7 352.0,160.7 352.0,158.8 351.1,157.0"/>
<polygon fill="#c7e4c7" points="370.6,205.3 387.3,206.2 386.7,207.1 386.1,219.6 384.3,220.1 384.5,222.2 384.3,224.3 382.4,225.5 380.1,226.1 377.8,224.3 377.4,222.5 376.5,220.8 375.9,219.1 375.8,217.2 375.3,215.4 374.8,213.6 373.4,212.3 372.3,210.7 371.8,208.8 370.8,207.2"/>
<polygon fill="#c7e4c7" points="386.7,207.6 388.6,206.9 390.6,207.3 392.6,207.2 394.4,206.4 395.5,207.8 396.5,209.1 398.0,210.0 400.0,211.3 401.6,213.0 400.4,214.8 399.1,216.0 397.9,217.2 396.2,217.8 394.6,218.5 393.2,219.6 391.5,219.3 389.7,219.6 387.8,219.4 386.1,220.1"/>
<polygon fill="#c7e4c7" points="389.1,198.1 390.6,197.3 391.5,195.7 392.9,194.9 394.4,194.5 396.3,195.5 398.5,195.2 400.4,196.3 402.8,198.1 404.0,196.5 405.1,194.9 406.4,193.3 408.1,192.9 409.9,192.8 410.1,194.6 410.4,196.4 411.1,198.1 409.3,198.9 408.1,200.5 406.0,201.3 404.0,202.3 402.3,202.9 401.0,204.2 399.2,204.7 397.6,205.3 395.9,205.4 394.4,206.4 392.5,206.3 390.7,205.7 389.1,204.7 388.9,202.5 388.8,200.3"/>
<polygon fill="#c7e4c7" points="398.0,210.0 396.5,209.1 395.5,207.8 394.4,206.4 395.9,205.4 397.6,205.3 399.2,204.7 400.8,204.1 402.2,203.0 404.0,202.9 406.2,203.4 408.1,204.7 408.4,206.5 408.0,208.3 407.5,210.0 406.2,211.7 405.2,213.6 403.3,213.7 401.6,213.0 400.0,211.3"/>
<polygon fill="#c7e4c7" points="411.1,198.1 413.1,197.4 414.8,196.2 416.7,195.3 418.7,194.6 420.6,193.9 421.0,195.9 420.5,197.8 420.8,199.8 421.2,201.7 419.8,203.5 418.3,205.3 416.9,206.7 415.4,208.1 413.5,208.8 412.4,210.7 411.1,212.4 412.5,214.0 412.9,216.0 411.1,218.4 409.0,219.2 407.0,220.1 405.2,218.4 405.6,216.0 405.2,213.6 406.2,211.7 407.5,210.0 408.0,208.3 408.4,206.5 408.1,204.7 406.2,203.4 404.0,202.9 406.1,201.7 408.1,200.5 410.1,201.4 412.3,201.7 411.4,200.0"/>
<polygon fill="#c7e4c7" points="408.7,193.3 410.5,192.8 411.4,194.8 412.3,196.9 412.5,198.9 412.4,200.9 412.3,202.9 410.5,201.7 410.3,199.3 410.5,196.9 409.7,195.1"/>
<polygon fill="#5aab5a" points="380.1,226.1 382.4,225.5 384.3,224.3 385.0,222.2 386.1,220.1 387.8,219.4 389.7,219.6 391.5,219.3 393.2,219.6 394.6,218.5 396.2,217.8 397.9,217.2 399.1,216.0 400.4,214.8 402.8,214.8 404.1,216.5 405.2,218.4 407.0,220.1 407.2,221.7 407.5,223.1 406.3,224.5 406.1,226.4 405.2,227.9 403.5,229.2 402.1,230.8 400.4,232.1 398.2,232.5 396.6,234.1 394.4,234.4 392.6,234.4 390.8,234.5 389.1,235.4 387.3,235.1 384.9,235.3 382.5,235.6 381.6,233.6 380.7,231.5 380.8,229.7 380.3,227.9"/>
<polygon fill="#ffffff" points="398.0,226.1 400.4,225.2 401.8,226.7 400.4,228.5 398.2,228.1"/>
<polygon fill="#c7e4c7" points="404.0,220.1 406.4,220.1 406.4,222.5 404.2,222.5"/>
<polygon fill="#e0f0e0" points="435.0,196.3 437.3,196.9 437.3,198.9 437.4,200.9 437.9,202.9 437.2,204.8 436.8,206.9 436.1,208.8 435.6,210.9 434.5,212.8 433.8,214.8 432.2,216.7 431.4,219.0 429.3,219.7 427.2,219.6 425.8,218.0 425.4,216.0 425.8,214.0 425.9,212.0 426.0,210.0 426.1,207.9 427.0,206.0 427.8,204.1 429.5,202.7 431.4,201.7 433.0,200.2 433.8,198.1"/>
<polygon fill="#c7e4c7" points="425.1,194.8 427.4,195.7 427.2,196.7 425.4,196.0"/>
<polygon fill="#c7e4c7" points="446.0,211.2 447.7,211.2 447.7,212.6 446.0,212.6"/>
<polygon fill="#c7e4c7" points="449.6,209.7 451.0,209.7 451.0,210.9 449.6,210.9"/>
<polygon fill="#e0f0e0" points="366.7,171.7 369.7,171.7 369.7,174.1 368.0,174.1 366.3,174.1"/>
<polygon fill="#c7e4c7" points="361.3,172.3 362.8,172.3 362.8,174.1 361.3,174.1"/>
<polygon fill="#5aab5a" points="401.5,51.4 403.4,52.4 405.6,52.4 407.5,53.4 409.3,53.7 411.0,54.3 412.9,53.8 414.7,54.2 416.4,54.9 418.1,55.1 419.6,56.1 421.4,56.3 423.2,55.2 425.4,54.9 427.3,55.2 429.3,55.9 431.3,55.8 431.5,56.7 433.6,56.6 435.6,56.4 437.5,55.5 439.6,55.4 441.6,54.4 443.7,54.4 445.8,54.3 447.9,54.0 450.0,53.5 452.1,53.6 454.2,53.7 456.0,53.4 457.8,52.8 459.9,52.7 461.9,53.8 464.0,54.2 466.1,54.3 467.4,52.4 467.9,50.2 469.7,49.5 471.3,48.1 473.2,47.8 475.4,48.1 477.4,49.0 477.6,51.4 477.0,53.7 479.0,54.3 480.1,52.6 480.4,50.5 482.2,50.3 483.9,49.7 485.7,49.1 487.5,49.0 489.3,49.5 491.1,49.6 492.9,49.6 494.7,49.6 495.9,51.3 494.9,49.4 493.5,47.8 495.1,46.4 497.1,46.1 498.9,45.1 500.6,44.2 503.1,43.7 505.4,43.0 507.2,42.9 509.0,42.9 510.8,42.6 512.6,42.2 514.7,41.5 516.9,41.9 519.0,41.4 521.2,41.6 523.3,41.2 525.2,40.6 527.2,40.1 529.2,39.8 531.1,39.5 532.8,40.6 534.6,40.2 536.4,40.4 538.3,40.7 540.1,39.9 542.0,40.0 542.0,40.6 544.4,40.5 546.8,40.6 547.9,41.9 549.1,43.0 548.0,45.4 549.1,46.6 551.2,46.1 553.3,46.5 555.4,46.3 557.5,46.6 559.6,46.9 561.7,46.7 563.8,47.3 565.8,47.8 567.7,48.6 569.8,48.5 571.8,49.0 573.6,49.5 575.4,49.7 577.1,50.5 578.9,50.8 581.1,50.7 583.2,50.6 585.2,49.9 587.3,49.6 589.1,49.6 590.9,49.7 592.7,49.3 594.4,49.0 596.8,47.4 598.6,47.7 600.5,47.9 602.3,48.1 604.0,49.0 605.9,49.1 607.8,49.5 609.7,49.9 611.6,50.1 613.5,50.2 615.4,50.1 617.3,50.8 619.2,50.3 621.1,50.6 623.0,50.8 624.9,50.8 626.7,51.2 628.5,51.7 630.2,52.5 632.6,54.3 634.9,53.4 637.3,52.9 639.1,52.6 640.9,53.5 642.7,53.5 644.5,53.1 646.3,53.6 648.1,54.1 649.2,52.5 651.0,52.0 652.8,52.9 654.6,52.4 656.4,52.5 658.3,52.4 660.1,52.9 662.0,52.9 664.6,53.2 664.9,55.1 664.5,57.0 664.8,58.9 664.8,60.8 664.6,62.7 663.7,64.5 662.0,65.7 660.2,65.6 658.5,66.3 656.8,66.6 655.2,67.4 653.4,68.0 651.8,69.1 649.8,69.0 648.1,69.8 646.3,70.1 644.5,70.2 642.7,69.8 640.9,69.8 638.8,69.1 637.3,67.4 639.1,65.7 637.7,66.2 636.1,66.5 636.1,68.4 635.5,70.3 635.2,72.2 634.8,74.7 633.8,77.0 631.9,78.3 630.4,79.9 629.0,81.7 627.2,82.9 625.6,84.3 624.2,85.9 623.9,83.9 622.6,82.2 622.3,80.1 621.8,78.2 622.8,76.2 624.2,74.6 625.7,73.3 627.1,72.1 628.4,70.7 630.2,69.8 632.0,67.4 629.8,67.0 627.6,67.6 625.4,67.4 623.9,68.6 622.3,69.6 620.6,70.4 618.7,71.2 616.6,70.9 614.7,71.6 612.7,71.4 610.8,70.9 608.7,71.0 606.8,70.6 604.9,71.4 603.0,71.8 601.1,71.6 599.2,71.6 597.2,72.3 595.9,74.2 593.8,74.6 592.0,75.8 590.4,77.0 588.5,77.8 586.7,78.8 588.3,79.5 589.7,80.5 591.7,80.9 593.6,80.1 595.6,79.9 596.6,81.3 598.2,81.7 597.7,84.1 597.4,86.5 596.5,88.1 595.0,89.4 594.4,91.3 592.7,92.7 591.1,94.3 589.7,96.0 587.8,96.9 586.5,98.4 584.9,99.6 582.5,99.4 580.1,100.2 579.7,98.6 578.9,97.2 580.6,96.3 581.9,95.0 583.1,93.7 584.1,91.9 585.5,90.4 583.3,89.7 581.0,90.3 578.8,89.9 576.6,89.5 575.2,88.1 573.4,87.5 571.8,86.5 570.3,84.6 569.4,82.3 567.0,82.3 564.6,81.5 562.7,81.9 561.1,82.9 560.6,84.7 559.9,86.5 558.5,87.7 556.8,88.2 555.1,88.9 553.9,90.7 552.4,89.2 550.5,88.1 549.1,86.5 547.3,86.3 545.6,87.3 543.8,87.6 542.0,87.7 540.1,87.8 538.4,87.0 536.5,86.8 534.6,87.2 532.8,86.5 530.9,85.5 528.8,85.1 526.9,84.1 524.5,83.6 522.1,83.5 520.0,84.6 518.0,85.7 516.1,87.1 514.1,87.2 512.2,86.7 510.2,86.5 507.7,86.8 505.4,87.7 503.7,88.8 501.8,89.5 499.5,87.7 497.5,87.0 495.5,86.7 493.5,86.5 491.6,85.4 489.4,84.8 487.5,83.5 486.0,82.5 484.6,81.3 483.4,79.9 481.6,79.8 479.8,80.2 478.0,79.9 476.1,79.0 474.0,78.9 472.0,78.2 469.9,78.2 468.0,79.3 465.8,78.9 463.7,79.3 462.0,79.9 460.2,80.4 458.4,80.4 456.6,80.5 456.2,82.3 456.0,84.1 453.9,85.0 451.5,84.9 449.4,85.9 447.5,85.2 445.4,85.5 443.5,85.3 441.3,85.0 439.3,85.6 437.2,85.4 435.1,85.9 433.6,87.8 431.5,88.9 432.1,90.5 432.3,92.2 433.3,93.7 433.4,95.7 433.2,97.7 432.2,99.6 432.3,101.7 429.9,101.9 427.5,101.7 425.7,101.0 423.9,100.5 422.1,99.9 421.4,99.6 420.2,97.7 418.4,96.6 417.4,94.1 418.4,92.3 419.4,90.6 417.4,88.6 415.9,87.4 413.8,87.5 412.0,86.9 410.5,85.7 409.0,84.5 407.7,83.1 406.5,81.7 404.7,80.7 403.5,79.2 402.0,77.8 400.1,77.1 398.3,76.2 398.4,73.9 397.5,71.7 396.5,69.3 398.3,69.0 399.7,67.8 401.5,67.8 402.9,66.2 404.5,64.8 403.8,62.8 403.2,60.8 402.5,58.8 401.4,57.2 401.4,55.1 400.5,53.4"/>
<polygon fill="#ffffff" points="410.5,58.8 412.4,58.7 414.5,59.0 416.4,58.3 418.3,59.4 420.4,59.8 419.4,61.8 417.4,62.1 415.4,61.5 413.4,61.3 411.0,60.3"/>
<polygon fill="#5aab5a" points="439.9,49.0 441.7,47.5 443.5,46.0 445.3,44.8 447.4,43.9 449.4,43.0 451.6,43.0 453.6,41.9 455.8,41.5 457.9,41.1 460.1,41.0 462.1,40.4 464.2,40.6 466.2,40.2 468.2,40.6 470.3,40.3 468.4,40.5 466.6,41.0 464.8,41.4 463.2,42.6 461.3,43.0 459.3,43.7 457.2,43.9 455.0,44.1 453.0,44.8 451.2,45.6 449.9,46.9 448.2,47.8 449.2,49.2 450.0,50.8 448.3,51.3 446.5,51.6 444.6,51.3 443.1,50.5 441.4,49.9"/>
<polygon fill="#5aab5a" points="512.6,35.5 514.7,35.6 516.7,34.9 518.9,35.3 520.9,34.7 534.0,37.1 532.3,37.5 530.4,37.1 528.6,37.3 526.9,37.9 525.0,37.3 523.0,38.0 521.2,36.9 519.3,36.9 517.3,37.1 515.6,36.8 514.1,36.1"/>
<polygon fill="#5aab5a" points="589.1,42.4 591.3,42.3 593.4,41.4 595.6,41.4 597.7,41.8 599.8,41.8 601.8,42.8 604.0,42.7 602.1,43.6 600.1,44.0 598.0,44.2 596.2,44.0 594.4,44.5 592.7,43.4 590.9,43.8"/>
<polygon fill="#5aab5a" points="598.0,79.9 600.4,81.7 601.0,84.1 601.0,86.5 602.2,87.8 602.8,89.5 600.4,91.3 600.3,93.8 599.2,96.0 600.7,97.0 602.4,97.2 604.0,97.8 603.0,99.5 601.6,100.8 599.8,100.7 598.0,100.2 597.8,98.0 597.1,95.9 597.4,93.7 597.5,91.9 597.9,90.1 598.4,88.3 598.0,86.5 598.4,84.3 597.5,82.1"/>
<polygon fill="#5aab5a" points="358.3,66.8 360.1,65.9 361.8,64.8 363.4,63.9 364.9,62.7 366.8,62.3 368.5,61.7 370.2,60.9 371.7,59.8 373.1,58.0 373.7,55.8 375.4,55.0 377.0,54.1 378.7,53.4 380.6,52.7 382.7,52.7 384.6,51.9 386.3,51.8 388.0,51.7 389.6,50.9 391.6,50.9 393.5,50.2 395.6,50.4 397.5,50.9 399.6,50.5 401.5,51.4 400.5,53.4 401.4,55.1 401.4,57.2 402.5,58.8 403.2,60.8 403.8,62.8 404.5,64.8 402.9,66.2 401.5,67.8 399.7,67.8 398.3,69.0 396.5,69.3 394.0,69.1 391.6,69.8 389.6,68.8 388.2,67.6 387.6,65.8 388.8,63.9 390.5,62.3 391.6,60.3 389.6,61.0 387.6,61.8 385.5,63.1 383.6,64.8 382.1,66.6 381.2,68.8 381.7,70.3 382.6,71.7 381.3,73.4 379.7,74.7 378.5,75.9 377.7,77.2 376.2,77.6 374.7,77.7 372.9,77.1 371.7,75.7 370.7,73.7 370.2,73.2 368.0,73.2 365.8,72.7 363.7,72.6 361.8,71.7 360.1,70.8 358.8,69.3"/>
<polyline fill="none" points="370.2,73.2 371.7,70.8 371.7,68.6 372.7,66.8 373.7,64.8 374.7,62.8 375.4,60.7 376.7,58.8 378.1,57.6 380.0,57.2 381.6,56.3 383.5,55.4 385.5,54.7 387.6,54.4 389.6,54.0 391.6,53.9 392.5,55.7 392.6,57.8 391.6,60.3"/>
<polyline fill="none" points="391.6,53.9 393.7,53.4 395.6,52.4 397.3,52.4 398.8,53.5 400.5,53.4"/>
<polygon fill="#98d098" points="388.1,71.9 389.8,71.6 391.6,71.2 393.6,71.5 395.6,71.2 397.5,71.7 397.7,73.7 395.7,74.3 393.6,73.9 391.6,73.9 390.1,73.6 388.6,73.5"/>
<polygon fill="#c7e4c7" points="387.6,74.2 389.6,74.0 391.6,73.9 393.6,73.9 395.7,74.3 397.7,73.7 398.3,76.2 395.9,76.2 393.6,76.5 391.6,76.0 389.6,75.7 387.6,76.2"/>
<polygon fill="#98d098" points="389.1,77.2 389.6,75.7 391.6,76.0 393.6,76.5 396.0,77.2 395.6,79.7 393.6,79.6 391.6,79.9 389.4,78.7"/>
<polygon fill="#c7e4c7" points="392.6,79.9 394.6,79.1 396.0,77.5 398.3,76.2 400.1,77.1 402.0,77.8 403.5,79.2 404.7,80.7 406.5,81.7 404.8,82.6 403.5,84.2 401.5,84.6 399.5,84.4 397.5,84.0 395.6,84.1 393.6,83.9 391.6,83.7 392.4,81.9"/>
<polygon fill="#5aab5a" points="375.7,81.2 377.6,80.2 379.7,80.3 381.6,79.7 383.5,79.1 385.3,78.8 387.3,79.4 389.1,78.7 391.6,80.2 392.1,81.9 391.6,83.7 391.3,85.7 390.6,87.6 388.6,87.3 386.6,87.6 384.6,87.1 382.7,86.3 380.7,86.4 378.7,86.1 377.3,85.1 375.7,84.7 376.0,82.9"/>
<polygon fill="#98d098" points="391.6,83.9 393.6,84.1 395.6,83.6 397.6,83.6 399.5,83.9 401.5,84.4 403.5,84.3 404.8,82.8 406.5,81.7 407.7,83.1 409.0,84.5 410.5,85.7 412.0,86.9 413.8,87.5 415.9,87.4 417.4,88.6 419.4,90.6 417.4,91.6 415.4,92.6 413.6,94.0 411.4,94.6 412.8,95.4 414.4,95.6 412.4,96.6 410.8,95.8 409.5,94.6 408.5,93.6 406.9,93.3 405.5,92.6 403.6,93.5 401.5,93.6 401.5,91.6 399.5,91.3 397.5,90.6 395.8,90.3 394.2,89.7 392.6,89.1 390.6,87.6 391.3,85.8"/>
<polygon fill="#f4f8f4" points="399.5,91.1 401.5,91.6 401.5,94.1 400.0,93.6"/>
<polygon fill="#286928" points="361.0,82.5 362.7,81.3 364.5,80.6 366.3,79.7 368.3,79.5 370.2,79.7 372.2,80.1 374.2,80.2 374.7,82.2 375.7,84.2 374.8,85.5 373.5,86.6 374.6,87.9 375.2,89.4 373.5,90.6 371.7,91.6 369.9,91.0 368.1,91.6 366.3,91.1 364.6,90.3 363.0,89.4 361.4,88.4 360.6,86.6 360.5,84.5"/>
<polygon fill="#5aab5a" points="365.3,74.7 366.8,74.5 368.2,74.2 369.5,76.7 369.2,78.2 368.7,79.7 366.3,80.2 365.3,77.7"/>
<polygon fill="#5aab5a" points="369.7,77.2 371.7,76.7 371.7,78.7 369.9,78.9"/>
<polygon fill="#5aab5a" points="358.8,82.2 360.3,81.8 361.8,81.5 361.7,83.1 361.8,84.7 359.3,84.8"/>
<polygon fill="#5aab5a" points="356.8,84.7 359.3,84.8 361.8,86.1 361.3,87.6 359.5,87.3 357.8,86.4"/>
<polygon fill="#3a873a" points="341.4,89.6 343.2,88.9 345.0,88.6 346.9,88.6 348.4,88.8 349.9,89.1 351.5,87.7 353.4,86.6 354.9,85.4 356.8,85.2 357.8,86.4 359.5,87.3 361.3,87.6 362.8,88.6 363.8,90.1 363.1,92.1 361.8,93.6 362.3,95.3 362.8,97.1 360.9,98.2 358.8,98.6 356.7,98.4 354.8,97.6 353.3,98.4 351.6,98.6 349.9,98.6 349.5,96.9 348.4,95.6 348.7,94.1 348.9,92.6 347.4,91.9 345.9,91.1 343.8,89.9"/>
<polygon fill="#3a873a" points="334.5,99.6 336.7,99.7 338.7,98.5 340.9,98.6 343.0,98.4 344.9,99.0 347.0,98.8 348.9,99.6 351.0,100.2 353.2,100.4 355.3,101.0 353.6,102.2 351.9,103.5 350.7,104.8 350.4,106.5 349.5,108.3 347.9,109.5 346.2,109.6 344.6,110.4 342.9,110.5 340.8,110.0 339.0,109.0 338.1,106.8 338.0,104.5 338.2,102.8 338.5,101.0 336.4,100.4"/>
<polygon fill="#5aab5a" points="334.5,100.0 336.4,100.4 338.2,101.0 337.8,102.8 338.0,104.5 338.1,106.8 338.8,109.0 336.9,109.6 335.0,109.5 335.0,107.6 334.3,105.7 335.1,103.8 334.7,101.9"/>
<polygon fill="#5aab5a" points="342.9,72.2 344.7,73.4 346.9,73.7 346.7,75.3 345.9,76.7 346.9,78.2 347.9,79.7 349.5,80.9 351.4,81.7 352.4,83.7 349.9,85.2 348.2,85.4 346.6,86.1 344.9,86.1 342.7,86.5 340.4,86.6 342.3,85.9 343.9,84.7 341.9,82.7 343.4,80.2 342.8,78.6 341.4,77.7 341.6,76.1 340.9,74.7 342.1,73.6"/>
<polygon fill="#286928" points="345.7,80.0 347.6,80.5 349.4,81.3 351.4,81.7 352.4,83.7 349.9,85.2 347.9,84.8 345.9,85.2 346.9,82.7"/>
<polygon fill="#5aab5a" points="332.5,81.2 334.0,79.8 336.0,79.2 337.6,79.9 339.5,80.2 338.9,81.9 339.0,83.7 337.3,84.1 335.6,84.3 334.0,84.7 333.6,82.8"/>
<polygon fill="#5aab5a" points="361.8,92.6 364.3,92.7 366.8,92.1 367.2,94.4 365.0,94.3 362.8,94.6"/>
<polygon fill="#5aab5a" points="367.2,92.1 369.5,91.5 371.7,91.1 374.2,90.9 376.7,91.6 376.7,93.8 375.1,94.6 373.3,94.0 371.7,94.6 369.5,95.0 367.2,94.4"/>
<polygon fill="#5aab5a" points="372.7,87.1 374.2,87.2 375.7,86.6 377.8,87.7 380.2,88.1 378.7,90.1 376.6,90.3 374.7,89.6 374.1,88.1"/>
<polygon fill="#98d098" points="378.7,90.1 380.2,88.6 382.3,88.6 384.5,88.9 386.6,89.4 386.1,91.1 384.1,91.2 382.2,91.9 380.2,91.6"/>
<polygon fill="#98d098" points="377.2,92.1 378.7,92.0 380.2,91.6 382.2,91.9 384.1,91.2 386.1,91.1 387.6,92.6 386.1,93.6 384.6,94.6 382.6,94.9 380.7,94.9 378.7,94.6"/>
<polygon fill="#c7e4c7" points="373.7,94.6 376.2,94.8 378.7,94.6 380.4,94.7 382.0,95.0 383.6,95.6 384.6,96.9 384.6,98.6 383.4,99.9 381.6,100.5 380.2,99.5 378.7,98.6 377.3,97.3 375.7,96.6"/>
<polygon fill="#98d098" points="383.6,95.6 385.5,94.7 387.6,94.6 388.7,95.9 389.1,97.6 388.7,99.3 388.1,101.0 385.1,101.0 384.6,98.6 384.6,96.9"/>
<polygon fill="#98d098" points="387.6,92.6 389.4,92.7 390.8,91.5 392.6,91.6 394.9,91.7 397.2,91.6 399.5,91.6 400.6,92.9 401.0,94.6 401.5,97.1 399.7,98.1 397.5,98.1 395.2,98.2 392.9,98.4 390.6,98.1 389.1,96.1 388.0,94.5"/>
<polygon fill="#98d098" points="390.1,98.6 392.0,98.9 393.8,98.1 395.7,98.7 397.5,98.3 399.0,98.7 400.5,99.1 399.5,101.7 397.5,102.0 395.5,101.8 393.6,102.5 391.9,102.5 390.6,101.5 390.4,100.0"/>
<polygon fill="#c7e4c7" points="382.6,101.0 384.5,101.3 386.3,101.0 388.1,101.3 387.6,104.0 385.6,104.4 383.6,104.5 383.6,102.6"/>
<polygon fill="#5aab5a" points="383.6,104.5 385.6,104.4 387.6,104.0 389.4,102.9 391.6,102.5 393.5,103.1 395.6,103.0 393.7,104.4 391.6,105.0 389.6,106.5 390.3,108.6 391.6,110.5 390.2,111.4 388.6,111.5 387.0,110.3 386.1,108.5 384.6,106.0"/>
<polygon fill="#5aab5a" points="388.6,112.9 390.6,113.3 392.6,112.9 392.6,113.9 390.6,114.3 388.6,113.9"/>
<polygon fill="#3a873a" points="362.8,95.1 365.0,94.5 367.2,94.4 369.1,94.4 370.9,94.4 372.7,94.6 371.7,97.1 372.9,98.3 374.5,99.2 375.7,100.5 377.2,101.7 378.5,103.1 379.7,104.5 378.7,106.5 377.2,105.5 375.7,104.5 376.5,106.5 377.2,108.5 374.7,109.0 373.6,107.2 372.5,105.5 371.7,103.5 370.1,102.5 368.9,101.1 367.8,99.6 366.3,98.5 364.8,97.6 363.8,96.3"/>
<polygon fill="#3a873a" points="371.2,109.0 373.4,109.4 375.7,109.3 374.7,111.0 373.2,110.7 371.7,110.5"/>
<polygon fill="#3a873a" points="364.6,102.5 366.3,102.5 366.2,104.5 366.3,106.5 364.8,106.5 364.6,104.5"/>
<polygon fill="#3a873a" points="365.3,99.1 366.4,99.1 366.4,101.5 365.3,101.5"/>
<polygon fill="#3a873a" points="354.3,105.0 355.8,105.0 355.8,106.3 354.3,106.3"/>
<polygon fill="#5aab5a" points="396.5,104.5 398.2,104.2 399.8,103.3 401.5,103.5 403.5,103.0 405.4,102.7 407.5,103.0 409.2,103.4 411.0,103.5 412.6,104.4 414.4,104.5 416.2,104.7 417.9,104.1 419.7,104.0 421.4,103.5 423.4,103.5 425.3,103.7 427.3,103.5 428.9,104.9 430.3,106.5 428.8,108.2 427.3,110.0 425.4,109.3 423.4,109.7 421.4,109.5 419.8,110.2 417.9,110.0 416.4,111.0 414.1,110.9 411.7,111.1 409.5,110.5 407.6,111.3 405.4,110.7 403.5,111.5 402.0,110.4 400.2,110.0 398.5,109.5 397.6,108.2 396.5,107.0"/>
<polygon fill="#5aab5a" points="393.1,102.5 394.8,102.9 396.5,103.0 396.5,104.5 394.1,104.5"/>
<polygon fill="#c7e4c7" points="408.5,112.9 411.4,112.7 411.4,113.9 408.7,113.9"/>
<polygon fill="#c7e4c7" points="421.4,100.5 423.4,100.6 425.4,100.9 427.3,101.5 429.5,102.1 431.3,103.5 431.8,105.0 432.3,106.5 430.3,106.5 428.9,104.9 427.3,103.5 425.4,103.7 423.7,102.9 421.9,102.5"/>
<polygon fill="#c7e4c7" points="427.5,102.3 429.9,101.8 432.3,101.7 434.0,102.9 435.8,104.1 436.4,105.8 436.4,107.6 434.1,107.1 431.7,107.1 430.3,105.9 428.7,105.3 427.8,103.9"/>
<polygon fill="#c7e4c7" points="431.5,88.9 433.6,87.8 435.1,85.9 437.2,85.4 439.3,85.6 441.3,85.0 443.5,85.3 445.4,85.5 447.5,85.2 449.4,85.9 451.5,84.9 453.9,85.0 456.0,84.1 456.2,82.3 456.6,80.5 458.4,80.4 460.2,80.4 462.0,79.9 463.7,79.3 465.8,78.9 468.0,79.3 469.9,78.2 472.0,78.2 474.0,78.9 476.1,79.0 478.0,79.9 479.8,80.2 481.6,79.8 483.4,79.9 484.6,81.3 486.0,82.5 487.5,83.5 489.4,84.8 491.6,85.4 493.5,86.5 495.5,86.7 497.5,87.0 499.5,87.7 501.8,89.5 499.7,90.6 498.3,92.5 496.8,93.8 494.8,94.5 493.5,96.0 492.6,98.0 491.1,99.6 489.3,99.9 487.6,100.3 485.7,99.6 484.0,100.2 482.0,100.9 480.0,100.6 478.0,100.8 476.0,101.5 474.2,102.8 472.0,103.2 469.8,102.1 467.3,102.0 465.5,100.5 463.3,99.6 461.3,98.4 459.5,97.9 457.7,97.4 456.1,96.2 454.2,96.0 452.2,96.6 450.2,96.5 448.2,96.6 448.0,98.7 447.6,100.8 445.6,100.2 443.5,100.2 441.9,99.0 441.1,97.2 441.8,95.3 442.9,93.7 441.1,93.1 439.3,92.8 437.5,92.5 435.5,93.5 433.3,93.7 432.3,92.2 432.1,90.5"/>
<polygon fill="#c7e4c7" points="505.4,87.7 507.7,86.8 510.2,86.5 512.2,86.7 514.1,87.2 516.1,87.1 518.0,85.7 520.0,84.6 522.1,83.5 524.5,83.6 526.9,84.1 528.8,85.1 530.9,85.5 532.8,86.5 534.6,87.2 536.5,86.8 538.4,87.0 540.1,87.8 542.0,87.7 543.8,87.6 545.6,87.3 547.3,86.3 549.1,86.5 550.8,87.2 552.2,88.3 553.9,88.9 555.3,90.0 557.0,90.6 558.7,91.3 559.9,93.1 558.3,94.5 556.3,95.1 554.6,96.4 552.7,97.2 550.7,97.5 548.8,98.0 546.8,98.4 545.0,98.9 543.8,100.4 542.0,100.8 539.8,100.9 538.0,102.1 536.1,102.8 534.0,103.2 532.3,102.4 530.5,101.9 528.6,101.5 526.9,100.8 525.1,100.4 523.3,100.5 521.5,101.3 519.7,100.8 517.8,99.7 515.7,98.9 513.8,97.8 512.5,96.2 510.8,95.1 509.0,94.2 507.5,92.4 505.4,91.3 503.4,90.7 501.8,89.5 503.7,88.8"/>
<polygon fill="#1a5219" points="480.5,106.4 482.4,105.9 484.3,105.3 485.9,104.1 487.9,102.9 488.8,100.6 490.6,99.3 491.9,98.0 493.2,96.7 494.2,95.1 495.5,93.6 497.6,93.0 499.0,91.6 501.1,90.6 503.2,89.8 505.4,91.3 507.5,92.4 509.0,94.2 510.8,95.1 512.5,96.2 513.8,97.8 515.7,98.9 517.8,99.7 519.7,100.8 521.5,101.3 523.3,100.5 525.1,100.4 526.9,100.8 528.6,101.5 530.5,101.9 532.3,102.4 534.0,103.2 536.1,103.1 538.0,102.3 539.9,101.5 542.0,101.4 543.4,100.2 545.4,99.8 546.8,98.4 548.8,98.0 550.7,97.5 552.7,97.2 554.6,96.4 556.3,95.1 558.3,94.5 559.9,93.1 557.7,92.6 555.6,91.7 553.6,90.7 554.8,88.9 557.1,88.2 558.9,86.6 560.1,84.9 560.7,83.0 563.0,82.9 564.9,81.8 567.3,82.4 569.7,83.0 571.1,84.9 572.0,87.2 574.1,88.2 575.8,89.9 578.0,90.7 579.8,91.2 581.6,91.2 583.4,90.9 585.2,91.3 584.3,93.4 582.8,94.9 581.3,95.8 580.5,97.4 579.2,98.5 577.7,99.3 576.0,99.5 574.4,100.3 572.9,101.1 571.5,102.3 569.7,102.6 567.6,102.9 565.7,103.9 563.7,104.4 561.5,104.6 559.7,105.6 557.8,106.4 556.0,107.7 557.7,107.0 559.5,107.1 561.3,107.2 562.6,108.4 563.7,109.8 561.9,110.6 560.1,111.6 560.0,113.2 558.9,114.6 560.4,115.9 561.5,117.6 562.5,119.3 562.4,121.2 563.1,122.9 562.5,124.7 560.8,125.9 560.1,127.7 558.5,128.9 557.4,130.6 556.6,132.4 554.7,133.6 552.4,133.6 550.6,134.8 548.9,135.0 547.3,135.6 545.8,136.6 544.0,136.7 542.3,137.2 540.2,136.7 538.4,135.8 536.3,135.4 534.3,134.9 532.4,134.7 530.3,134.8 527.8,135.0 525.6,136.0 524.7,134.5 523.5,133.3 522.0,132.4 522.0,130.2 521.6,127.9 520.0,126.8 518.2,125.9 516.9,124.3 515.0,125.4 513.0,126.2 510.9,126.7 508.5,126.9 506.1,126.1 504.2,126.0 502.6,124.9 500.6,124.6 499.0,123.3 497.3,122.4 495.4,121.9 493.1,122.7 490.6,122.5 489.7,120.9 488.3,119.6 486.8,118.2 485.7,116.5 484.7,114.8 483.2,113.9 481.7,113.0 482.4,111.4 483.5,110.0 482.3,108.2"/>
<polygon fill="#1a5219" points="539.9,140.8 541.6,140.2 543.5,140.2 542.9,142.6 540.5,142.6"/>
<polygon fill="#5aab5a" points="560.7,131.2 562.5,131.0 561.9,133.2 561.9,135.4 560.4,136.0 560.2,133.6"/>
<polygon fill="#5aab5a" points="570.3,108.6 572.4,108.1 574.4,107.2 575.2,109.1 576.8,110.4 575.5,111.6 575.0,113.4 573.2,113.7 571.5,114.6 570.8,112.6 570.5,110.6"/>
<polygon fill="#5aab5a" points="597.7,97.3 599.5,96.9 601.2,96.1 602.7,97.3 604.2,98.5 602.3,99.1 600.6,100.3 598.3,101.4 598.1,99.3"/>
<polygon fill="#5aab5a" points="595.9,102.1 597.4,102.8 598.9,103.8 598.2,105.6 598.6,107.4 598.3,109.2 596.8,111.0 595.3,112.8 593.5,113.1 592.0,113.8 590.5,114.8 588.7,114.8 587.0,115.5 585.2,115.5 582.7,115.5 580.4,116.3 578.8,116.5 577.4,115.8 579.0,115.0 580.1,113.6 581.6,112.8 583.5,111.9 585.6,111.5 587.5,110.7 589.8,109.9 591.7,108.4 593.0,106.8 594.1,105.3 595.5,103.9"/>
<polygon fill="#5aab5a" points="576.8,116.3 578.6,116.3 580.4,116.3 579.7,118.1 579.2,119.9 577.4,120.5 577.5,118.4"/>
<polygon fill="#f4f8f4" points="444.8,104.1 447.0,103.6 448.9,102.3 450.7,101.6 452.5,101.1 454.8,101.8 456.3,103.7 458.5,104.7 459.8,106.2 461.4,107.4 463.2,108.2 464.7,108.5 466.2,108.8 464.4,110.6 462.7,111.1 461.0,111.8 459.7,113.0 457.7,112.0 455.5,111.8 453.6,111.0 451.7,110.2 450.1,108.8 448.3,108.6 446.6,108.1 444.8,108.2 444.8,106.2"/>
<polygon fill="#c7e4c7" points="447.8,96.9 449.7,96.4 451.7,96.3 453.7,96.3 455.2,97.5 456.9,98.3 458.5,99.3 460.5,99.4 462.5,99.7 464.4,100.5 465.7,101.8 467.2,102.9 468.0,104.7 469.6,105.7 471.6,105.8 469.2,107.6 467.8,108.5 466.2,108.8 464.7,108.5 463.2,108.2 461.4,107.4 459.8,106.2 458.5,104.7 456.3,103.7 454.8,101.8 452.5,101.1 450.7,101.6 448.9,102.3 448.7,100.8 448.4,99.3"/>
<polygon fill="#f4f8f4" points="457.3,114.8 459.7,113.0 461.0,111.8 462.7,111.1 464.4,110.6 466.2,108.8 467.8,108.5 469.2,107.6 471.0,107.5 472.8,107.6 474.6,108.2 474.5,109.8 474.0,111.2 473.1,112.8 472.6,114.5 471.6,116.0 470.4,117.2 469.3,118.4 468.0,119.6 466.4,120.4 464.8,121.1 463.2,121.9 461.5,122.7 459.8,123.2 457.9,123.1 456.7,120.8 457.3,118.8 457.1,116.8"/>
<polygon fill="#c7e4c7" points="468.0,104.7 469.8,103.8 471.6,102.9 473.5,102.9 475.1,101.7 476.9,101.3 478.7,101.1 481.2,101.1 483.5,100.2 485.7,100.1 487.9,99.7 490.0,99.5 488.6,101.0 487.7,102.9 485.9,104.1 484.3,105.3 482.4,105.9 480.5,106.4 478.6,107.3 476.5,107.3 474.6,108.2 472.8,107.6 471.0,107.5 469.2,107.6 471.6,105.8 469.6,105.7"/>
<polygon fill="#5aab5a" points="428.1,108.8 429.9,108.1 431.7,107.1 433.6,107.4 435.6,107.8 437.6,107.6 439.2,108.4 440.6,109.4 442.5,109.3 444.2,108.2 446.2,108.1 448.1,108.9 450.1,108.8 451.7,110.2 453.6,111.0 455.5,111.8 456.1,113.5 457.3,114.8 457.1,116.8 457.3,118.8 456.7,120.8 458.1,122.1 458.5,124.1 459.7,125.5 459.0,127.5 459.1,129.7 456.8,130.0 454.7,128.8 452.5,129.1 451.0,128.2 449.2,127.8 447.8,126.7 445.8,127.2 443.7,127.2 441.8,127.9 440.2,126.5 439.1,124.6 437.6,123.1 436.3,122.1 434.6,121.9 434.0,120.2 433.5,118.4 432.6,116.2 430.8,114.5 429.9,112.4 429.0,110.6"/>
<polygon fill="#5aab5a" points="459.1,129.7 459.0,127.5 459.7,125.5 457.9,123.1 459.8,123.2 461.5,122.7 463.2,121.9 464.8,121.1 466.4,120.4 468.0,119.6 469.3,118.4 470.4,117.2 471.6,116.0 472.6,114.5 473.1,112.8 474.0,111.2 476.4,111.0 478.7,110.6 480.0,112.0 481.7,113.0 481.3,115.2 480.5,117.2 481.1,119.6 479.6,121.2 477.8,122.6 476.4,124.3 474.6,125.2 472.8,126.1 472.7,128.1 471.6,129.7 473.4,132.1 471.3,132.6 469.2,132.7 467.8,131.7 466.8,130.3 464.8,130.7 463.0,129.8 461.0,129.9"/>
<polygon fill="#5aab5a" points="481.7,113.0 483.2,113.9 484.7,114.8 485.7,116.5 486.8,118.2 488.3,119.6 489.1,121.6 490.6,123.1 492.3,123.8 494.1,124.2 495.4,125.5 497.1,126.2 499.1,126.0 500.8,126.9 502.6,127.3 504.3,128.2 506.1,128.5 508.6,128.4 510.9,127.3 513.1,126.8 515.1,125.8 516.9,124.3 518.5,125.5 520.4,126.1 519.6,128.1 519.2,130.3 517.3,131.3 515.7,132.7 514.4,133.8 513.7,135.4 512.1,136.2 509.7,135.1 508.8,133.0 507.3,131.5 505.0,132.7 505.2,134.5 505.0,136.2 502.9,137.1 501.4,138.6 500.2,140.4 498.5,141.7 497.1,143.3 495.4,144.6 493.8,146.1 492.5,148.0 490.6,149.4 490.9,151.2 490.8,153.0 490.4,154.7 490.0,156.5 488.8,157.8 487.2,158.8 485.9,160.1 485.1,158.0 483.5,156.5 482.7,154.9 482.4,153.0 481.8,151.3 480.5,149.9 479.9,148.2 479.0,146.5 478.4,144.7 477.8,142.9 477.5,141.0 477.3,138.6 477.0,136.2 475.3,136.4 474.0,137.4 472.8,136.2 471.3,135.4 470.4,133.9 471.8,132.9 473.4,132.1 471.6,129.7 472.7,128.1 472.8,126.1 474.6,125.2 476.4,124.3 477.8,122.6 479.6,121.2 481.1,119.6 480.5,117.2 481.3,115.2"/>
<polygon fill="#c7e4c7" points="490.6,123.1 493.0,122.8 495.4,122.5 497.1,123.6 499.1,123.7 501.0,124.4 502.6,125.5 504.4,126.0 506.1,126.7 506.1,128.5 504.3,128.2 502.6,127.3 500.8,126.9 499.1,126.0 497.1,126.2 495.4,125.5 494.1,124.2 492.3,123.8"/>
<polygon fill="#c7e4c7" points="507.3,126.1 509.4,126.0 511.5,126.1 511.5,127.9 509.4,128.4 507.3,127.9"/>
<polygon fill="#98d098" points="506.1,130.3 507.9,129.5 509.7,129.7 510.3,131.4 511.5,132.7 511.0,134.4 510.9,136.2 509.1,135.9 507.3,135.6 506.8,133.9 505.5,132.7"/>
<polygon fill="#c7e4c7" points="489.5,158.3 491.8,157.7 492.8,159.4 493.6,161.3 492.6,162.7 491.8,164.2 489.5,163.6 489.8,161.9 488.9,160.1"/>
<polygon fill="#f4f8f4" points="512.1,136.2 513.7,135.4 514.4,133.8 515.7,132.7 517.3,131.3 519.2,130.3 520.2,128.9 521.6,127.9 522.5,129.5 523.0,131.2 524.0,132.7 525.2,134.2 525.6,136.0 526.8,137.2 527.0,139.7 528.0,142.0 525.9,142.0 523.9,141.7 522.0,140.8 522.9,142.7 524.0,144.6 521.6,143.4 521.8,145.4 522.8,147.3 522.8,149.4 522.7,151.2 523.8,152.9 523.6,154.7 524.0,156.5 522.5,155.7 521.6,154.1 521.5,152.2 520.7,150.5 519.4,148.9 519.2,147.0 517.4,146.6 515.7,145.8 515.1,143.8 515.0,141.8 514.5,139.8 513.2,138.1"/>
<polygon fill="#e0f0e0" points="416.8,110.6 418.6,110.5 420.4,110.1 422.1,109.8 423.9,109.4 423.1,111.1 423.3,113.0 421.7,114.2 419.6,114.8 418.0,116.0 415.6,114.8 415.8,112.6"/>
<polygon fill="#98d098" points="423.3,113.0 423.1,111.1 423.9,109.4 426.0,109.3 428.1,108.8 429.0,110.6 429.9,112.4 430.8,114.5 432.6,116.2 433.5,118.4 434.0,120.2 434.6,121.9 433.0,122.9 431.1,123.1 429.6,122.0 428.1,120.7 426.3,120.2 424.5,118.8 422.2,118.5 420.3,117.2 421.6,116.0 422.4,114.5"/>
<polygon fill="#c7e4c7" points="412.0,113.0 413.5,114.4 415.6,114.8 418.0,116.0 420.3,117.2 418.1,118.0 416.3,119.4 414.4,120.8 412.0,120.2 411.8,118.4 411.9,116.6 412.5,114.8"/>
<polygon fill="#5aab5a" points="414.4,120.8 416.3,119.4 418.1,118.0 420.3,117.2 422.2,118.5 424.5,118.8 426.3,120.2 428.1,120.7 429.6,122.0 431.1,123.1 433.0,123.4 434.6,124.3 435.2,126.2 436.8,127.4 437.6,129.1 438.9,130.7 440.6,132.1 442.3,132.5 443.7,133.4 445.4,133.9 446.0,135.6 446.6,137.4 444.8,138.8 443.7,140.9 441.8,142.2 439.6,142.2 437.6,142.8 435.5,143.4 433.5,144.0 431.7,144.7 429.9,144.7 428.1,144.7 426.3,145.2 425.5,143.4 423.9,142.2 422.8,140.4 421.8,138.5 420.2,136.9 419.1,135.1 418.7,133.2 418.0,131.6 416.6,130.2 416.0,128.5 415.6,126.7 414.8,124.8 414.4,122.8"/>
<polygon fill="#c7e4c7" points="434.0,122.5 435.8,122.5 435.8,124.6 434.4,124.6"/>
<polygon fill="#c7e4c7" points="441.2,132.1 443.4,131.7 445.6,131.7 447.8,130.9 447.8,133.3 446.0,134.1 444.6,133.0 443.0,132.3"/>
<polygon fill="#c7e4c7" points="447.8,129.7 449.7,130.9 451.3,132.7 453.0,134.3 454.3,136.2 453.0,138.2 451.3,139.8 449.8,141.1 448.1,142.1 446.6,143.4 444.7,144.2 443.0,145.2 442.7,143.6 441.8,142.2 443.7,140.9 444.8,138.8 446.6,137.4 446.0,135.6 445.4,133.9 447.8,133.3 448.2,131.5"/>
<polygon fill="#c7e4c7" points="426.3,145.2 428.1,144.7 429.9,144.7 431.7,144.7 433.5,144.0 435.5,143.4 437.6,142.8 439.6,142.2 441.8,142.2 442.7,143.6 443.0,145.2 441.3,146.4 439.2,146.9 437.9,148.8 435.8,149.4 433.7,149.8 431.6,150.2 429.6,151.3 427.5,151.7 426.8,149.8 425.7,148.2 426.0,146.7"/>
<polygon fill="#98d098" points="530.3,135.4 532.7,135.9 535.1,136.0 536.0,138.0 537.5,139.6 537.4,141.5 536.3,143.2 537.4,144.8 539.0,146.1 539.9,147.9 540.3,150.0 541.7,151.5 541.3,153.2 540.0,154.5 539.9,156.3 538.0,157.4 535.7,157.9 533.9,159.2 533.2,157.8 533.3,156.3 534.5,154.8 536.0,153.8 537.5,152.7 537.4,150.3 536.9,147.9 535.6,146.4 534.7,144.6 533.3,143.2 532.1,141.9 531.4,140.4 530.3,139.0 530.8,137.2"/>
<polygon fill="#e0f0e0" points="526.8,137.2 528.6,138.1 530.3,139.0 531.4,140.4 532.1,141.9 533.3,143.2 534.7,144.6 535.6,146.4 536.9,147.9 536.6,149.7 536.3,151.5 534.8,151.0 533.3,150.3 532.7,147.9 532.1,145.5 530.9,144.1 529.2,143.4 528.0,142.0 527.0,139.7"/>
<polygon fill="#98d098" points="522.0,140.8 523.9,141.7 525.9,142.0 528.0,142.0 529.2,143.4 530.9,144.1 532.1,145.5 532.7,147.9 533.3,150.3 532.0,151.2 530.3,151.5 529.1,153.9 527.6,152.3 525.6,151.5 524.1,152.4 523.2,153.9 523.7,155.6 523.3,157.5 524.4,159.2 524.4,161.0 525.6,163.4 523.6,163.2 522.0,162.2 522.7,160.4 522.7,158.4 523.4,156.5 523.4,154.7 522.8,152.9 523.1,151.1 522.8,149.4 523.5,147.0 524.0,144.6 522.9,142.7"/>
<polygon fill="#e0f0e0" points="530.3,151.5 532.0,151.2 533.3,150.3 534.8,151.0 536.3,151.5 537.5,152.7 535.9,153.5 535.5,155.4 533.9,156.3 532.4,155.7 530.9,155.1 530.3,153.3"/>
<polygon fill="#98d098" points="560.7,142.6 563.7,142.6 563.3,144.3 563.2,146.1 563.1,147.9 563.6,149.9 564.9,151.5 562.5,150.3 560.9,148.8 560.1,146.7 560.4,144.6"/>
<polygon fill="#98d098" points="563.7,152.7 566.1,152.6 568.5,153.3 569.3,155.1 570.2,156.8 570.9,158.6 570.5,160.7 569.7,162.5 569.7,164.6 567.8,163.8 566.7,162.2 567.1,160.4 567.9,158.6 566.0,157.6 564.3,156.3 564.1,154.5"/>
<polygon fill="#98d098" points="563.1,161.0 565.5,160.1 564.9,161.7 564.9,163.4"/>
<polygon fill="#98d098" points="562.8,155.0 564.6,155.2 566.3,155.5 568.1,154.6 569.9,155.0 570.0,157.0 570.4,159.0 571.1,161.0 569.9,162.4 568.7,163.9 566.7,163.5 565.2,162.1 564.3,160.5 564.0,158.6 563.0,156.9"/>
<polygon fill="#98d098" points="554.8,160.1 556.0,158.3 557.1,156.4 558.9,155.1 559.9,156.0 558.6,157.8 557.1,159.3 555.7,161.0"/>
<polygon fill="#286928" points="548.5,214.6 550.0,213.7 551.0,212.3 552.0,211.0 554.0,210.3 556.0,209.6 558.0,209.2 560.2,208.7 561.8,206.9 564.0,206.2 565.3,204.6 566.4,202.7 568.1,201.9 569.5,200.6 571.1,199.7 572.8,200.7 574.7,200.9 576.0,199.6 577.2,198.2 578.3,196.7 580.8,196.6 583.0,195.5 585.0,195.9 587.0,195.8 589.0,196.1 588.0,197.8 587.2,199.7 588.6,200.7 589.9,201.8 591.4,202.7 592.8,203.8 594.6,204.2 596.1,205.1 596.5,202.6 597.3,200.3 598.3,198.4 598.0,196.2 599.1,194.3 600.2,195.7 600.2,197.6 600.9,199.1 602.3,200.1 603.3,201.5 604.5,202.7 605.0,205.1 605.7,207.4 607.2,208.8 608.5,210.2 610.4,211.0 611.8,212.5 613.0,214.0 614.0,215.8 615.5,217.3 616.2,219.5 617.6,221.1 618.1,222.9 618.1,224.7 618.2,226.5 617.7,228.5 616.6,230.3 616.4,232.5 615.5,234.6 613.8,236.3 612.8,238.4 610.7,239.1 608.9,240.4 606.9,241.4 604.9,242.0 602.9,241.3 600.9,242.0 599.4,241.3 597.8,240.6 596.1,240.2 595.0,238.8 593.6,237.6 592.6,236.0 592.1,234.0 590.8,232.5 590.3,234.4 589.0,236.0 587.8,234.8 586.8,233.5 585.4,232.5 583.6,231.2 581.3,231.3 579.5,230.1 577.5,230.1 575.5,230.7 573.5,230.7 571.7,231.2 569.9,231.5 568.0,231.6 566.4,232.5 564.4,233.1 562.3,233.4 560.4,234.2 558.4,234.8 556.4,235.4 554.4,236.0 552.8,235.0 550.9,234.8 551.5,232.5 552.0,230.1 551.2,228.1 550.6,226.0 549.7,224.1 549.2,222.5 548.4,221.0 547.9,219.4 548.0,216.9"/>
<polygon fill="#286928" points="603.3,246.8 605.3,247.1 607.3,247.0 609.2,246.5 607.9,248.3 606.9,250.3 604.5,249.7 603.7,248.3"/>
<polygon fill="#98d098" points="516.3,165.1 518.1,165.2 519.9,165.7 521.5,166.8 523.2,167.7 524.7,168.9 525.8,170.5 527.0,172.5 528.7,173.9 530.6,175.3 531.9,176.9 533.5,178.0 535.4,178.8 534.6,181.2 534.8,183.6 532.7,183.5 530.6,183.0 529.5,181.5 528.4,180.1 527.0,179.0 525.8,177.6 524.7,176.1 523.7,174.5 522.0,173.4 521.1,171.7 520.2,170.1 518.3,169.2 517.5,167.5"/>
<polygon fill="#5aab5a" points="521.7,158.6 523.3,158.7 524.6,159.8 526.0,161.0 527.2,162.3 528.0,164.0 529.4,165.1 530.4,166.8 530.9,168.6 531.2,170.5 528.8,170.5 528.3,168.6 526.5,167.5 525.8,165.7 524.3,163.9 522.9,162.1 522.5,160.3"/>
<polygon fill="#98d098" points="534.2,185.4 535.9,186.2 537.8,185.6 539.5,186.7 541.3,186.6 543.4,187.1 545.5,187.5 547.6,187.9 549.7,188.4 551.8,188.4 553.8,189.1 556.0,189.0 558.0,189.6 560.4,191.4 558.6,191.3 556.8,191.2 555.0,191.1 553.2,190.8 551.3,190.6 549.5,189.8 547.5,189.8 545.5,189.8 543.7,189.0 541.5,189.0 539.5,188.2 537.5,187.3 535.4,187.2"/>
<polygon fill="#98d098" points="540.7,174.1 542.4,173.1 543.7,171.7 545.5,170.4 547.9,170.5 549.7,169.3 550.5,167.3 552.0,165.7 553.2,163.9 555.3,164.7 557.4,165.1 556.1,166.5 555.0,168.1 556.4,169.8 557.4,171.7 557.6,173.6 556.8,175.3 555.3,176.6 554.9,178.8 553.2,180.0 550.9,180.4 548.5,180.6 547.0,179.7 545.3,179.4 543.7,178.8 541.3,177.1 540.5,175.7"/>
<polygon fill="#5aab5a" points="544.9,171.1 546.3,169.9 548.3,170.0 549.7,168.7 551.0,167.2 552.2,165.7 553.2,163.9 555.3,164.7 557.4,165.1 556.2,166.3 555.0,167.5 552.9,167.7 550.9,168.1 549.6,169.5 548.5,171.1 546.7,170.6"/>
<polygon fill="#98d098" points="558.0,175.9 560.1,174.7 561.6,172.9 563.8,172.6 565.9,172.1 568.1,172.3 565.8,173.1 564.0,174.7 561.6,176.4 562.3,178.8 564.0,180.6 565.0,181.9 565.2,183.6 563.7,182.7 562.2,181.8 560.4,179.4 559.4,181.7 559.2,184.2 558.9,182.3 558.0,180.6 558.1,178.2"/>
<polygon fill="#98d098" points="572.9,171.1 574.7,171.7 574.9,173.8 574.9,175.9 573.3,175.3 572.8,173.2"/>
<polygon fill="#98d098" points="569.9,180.0 572.3,179.8 572.3,181.2 570.2,181.4"/>
<polygon fill="#98d098" points="574.7,179.4 577.1,179.4 577.1,180.7 574.7,180.7"/>
<polygon fill="#98d098" points="564.0,189.6 566.4,189.7 568.7,189.0 567.7,190.3 567.0,191.9 565.2,191.0"/>
<polygon fill="#98d098" points="578.3,187.8 580.9,186.9 581.2,188.4 578.9,189.2"/>
<polygon fill="#98d098" points="579.5,176.4 581.9,176.6 584.2,175.9 586.1,176.9 587.8,178.2 590.1,177.6 592.6,177.6 594.4,179.0 596.7,179.4 597.1,181.3 596.4,183.2 596.4,185.1 597.0,187.0 597.1,188.9 596.7,190.8 594.5,190.1 592.6,189.0 591.2,187.6 590.2,186.0 588.7,184.9 586.9,184.6 585.4,183.6 583.6,182.2 581.8,180.6 580.5,178.6"/>
<polygon fill="#e0f0e0" points="596.7,179.4 598.6,179.9 600.2,181.0 602.1,181.2 603.5,182.7 605.0,183.9 606.9,184.8 607.4,186.5 608.6,187.8 610.5,189.1 611.8,190.9 613.4,192.5 611.3,192.7 609.2,191.9 607.5,190.5 605.7,189.0 603.2,189.1 600.9,188.4 598.6,189.2 596.7,190.8 597.1,188.9 597.0,187.0 596.4,185.1 596.4,183.2 597.1,181.3"/>
<polygon fill="#e0f0e0" points="609.2,184.2 611.3,183.8 613.4,183.4 615.2,182.4 616.4,183.6 614.8,184.0 613.3,184.9 611.6,185.4"/>
<polygon fill="#c7e4c7" points="623.0,186.6 624.9,186.9 626.6,187.8 628.6,188.8 630.5,190.0 632.0,191.7 633.7,193.1 633.1,194.3 631.4,193.0 629.6,191.8 627.8,190.8 626.5,189.6 625.2,188.5 623.6,187.8"/>
<polygon fill="#c7e4c7" points="640.3,200.3 641.5,200.0 642.5,201.7 643.5,203.3 642.3,203.6 641.7,201.7"/>
<polygon fill="#c7e4c7" points="636.1,210.4 637.9,210.1 639.3,211.3 640.9,212.2 642.3,213.4 641.5,214.3 639.6,213.1 638.1,211.4"/>
<polygon fill="#c7e4c7" points="662.1,203.3 664.7,202.9 664.7,204.4 662.3,204.6"/>
<polygon fill="#5aab5a" stroke-width="1.6" points="651.5,235.1 653.0,234.8 653.9,236.2 655.4,236.9 656.4,238.3 657.8,239.3 658.4,240.8 659.9,240.7 661.3,240.4 662.8,241.4 660.7,243.5 659.0,245.6 658.1,246.9 656.9,247.9 655.1,247.1 656.0,245.0 653.6,243.8 655.4,242.3 656.0,240.5 654.2,238.7 652.4,236.6"/>
<polygon fill="#5aab5a" stroke-width="1.6" points="651.5,245.6 653.0,246.4 654.2,247.9 652.7,249.4 653.0,251.2 651.6,252.2 650.0,252.7 649.5,254.2 648.5,255.4 647.3,256.8 645.5,257.5 642.9,256.3 641.0,255.4 642.6,253.0 644.9,251.2 647.6,250.0 649.4,247.6"/>
</g><g stroke="none">
<rect x="27" y="18" width="18" height="54.5" rx="9" fill="#043f04"/>
<rect x="18" y="35.6" width="36" height="18.4" rx="9.2" fill="#043f04"/>
<rect x="27" y="77.2" width="18" height="53.6" rx="9" fill="#043f04"/>
<polygon points="36,22 41.3,30.8 30.7,30.8" fill="#fff"/>
<polygon points="36,67.6 41.3,59.3 30.7,59.3" fill="#fff"/>
<polygon points="22.2,44.9 31,39.6 31,50.2" fill="#fff"/>
<polygon points="50.2,44.9 40.9,39.6 40.9,50.2" fill="#fff"/>
<rect x="31.2" y="86.1" width="9.6" height="2" fill="#fff"/><rect x="35" y="82.3" width="2" height="9.6" fill="#fff"/>
<rect x="31.2" y="119.9" width="9.6" height="2" fill="#fff"/>
<circle cx="36" cy="103.9" r="8" fill="#ebebf7"/>
<g fill="none" stroke="#6a5fd2" stroke-width="0.6"><circle cx="36" cy="103.9" r="8"/><ellipse cx="36" cy="103.9" rx="4" ry="8"/><line x1="36" y1="95.9" x2="36" y2="111.9"/><line x1="28" y1="103.9" x2="44" y2="103.9"/><path d="M29.2 99.7 Q36 102 42.8 99.7 M29.2 108.1 Q36 105.8 42.8 108.1"/></g>
</g></svg><!--/MAP--></div>
    <div class="abs" style="left:17px;top:400px;width:143px;height:20px;background:linear-gradient(90deg,#ffffff 0%,#cfe6cf 25%,#8fc28f 50%,#3f8f3f 75%,#006400 95%,#005200 100%)"></div>
    <div class="abs" style="left:10px;top:400px;font-size:12px;line-height:14px;color:#000">0</div>
    <div class="abs" style="left:99px;top:400px;font-size:12px;line-height:14px;color:#000">78,327</div>
    <div class="hl" style="left:0;top:430px;width:715px"></div>
    <div class="lbl" style="left:20px;top:441px">Report View by Selection</div>
    <div class="lbl link" style="left:auto;right:21px;top:441px">Customize</div>
    <div class="hl" style="left:0;top:466px;width:715px"></div>
    <!--TABLE-->
    <div class="abs" style="left:0;top:467px;width:711px;height:38px;background:#f4f4f4"></div>
    <div class="th" style="left:14px;top:470px;">Total:</div>
    <div class="th" style="left:22px;top:486px;">5</div>
    <div class="th" style="left:80px;top:478px;">Research Fields</div>
    <div class="th" style="left:216px;top:470px;">Web of Science</div>
    <div class="th" style="left:225px;top:486px;">Documents</div>
    <div class="th" style="left:358px;top:478px;color:#426fa8">Cites</div>
    <div class="abs" style="left:395px;top:483px;width:0;height:0;border-left:4px solid transparent;border-right:4px solid transparent;border-top:4px solid #5b8fd0"></div>
    <div class="th" style="left:457px;top:478px;">Cites/Paper</div>
    <div class="th" style="left:592px;top:478px;">Top Papers</div>
    <div class="abs" style="left:0;top:505px;width:711px;height:25px;background:#fafafa;border-bottom:1px solid #e2e2e2"></div>
    <div class="td" style="right:656px;top:508px">1</div>
    <div class="td" style="right:390px;top:508px">1,160</div>
    <div class="td" style="right:278px;top:508px">15,695</div>
    <div class="td" style="right:161px;top:508px">13.53</div>
    <div class="fld" style="left:80px;top:510px">ENGINEERING</div>
    <div class="bar" style="left:604px;top:508px"><b style="width:100%"></b><span style="color:#fff">10</span></div>
    <div class="abs" style="left:0;top:530px;width:711px;height:26px;background:#fafafa;border-bottom:1px solid #e2e2e2"></div>
    <div class="td" style="right:656px;top:534px">2</div>
    <div class="td" style="right:390px;top:534px">521</div>
    <div class="td" style="right:278px;top:534px">9,894</div>
    <div class="td" style="right:161px;top:534px">18.99</div>
    <div class="fld" style="left:80px;top:536px">CHEMISTRY</div>
    <div class="bar" style="left:604px;top:533px"><b style="width:50%"></b><span style="color:#3a66a8">5</span></div>
    <div class="abs" style="left:0;top:556px;width:711px;height:34px;background:#fafafa;border-bottom:1px solid #e2e2e2"></div>
    <div class="td" style="right:656px;top:564px">3</div>
    <div class="td" style="right:390px;top:564px">506</div>
    <div class="td" style="right:278px;top:564px">8,535</div>
    <div class="td" style="right:161px;top:564px">16.87</div>
    <div class="fld" style="left:80px;top:559px">MATERIALS<br>SCIENCE</div>
    <div class="bar" style="left:604px;top:563px"><b style="width:30%"></b><span style="color:#3a66a8">3</span></div>
    <div class="abs" style="left:0;top:590px;width:711px;height:34px;background:#fafafa;border-bottom:1px solid #e2e2e2"></div>
    <div class="td" style="right:656px;top:598px">4</div>
    <div class="td" style="right:390px;top:598px">375</div>
    <div class="td" style="right:278px;top:598px">6,841</div>
    <div class="td" style="right:161px;top:598px">18.24</div>
    <div class="fld" style="left:80px;top:593px">ENVIRONMENT/E<br>COLOGY</div>
    <div class="bar" style="left:604px;top:597px"><b style="width:40%"></b><span style="color:#3a66a8">4</span></div>
    <div class="abs" style="left:0;top:624px;width:711px;height:26px;background:#fafafa;border-bottom:1px solid #e2e2e2"></div>
    <div class="td" style="right:656px;top:628px">0</div>
    <div class="td" style="right:390px;top:628px">3,208</div>
    <div class="td" style="right:278px;top:628px">48,913</div>
    <div class="td" style="right:161px;top:628px">15.25</div>
    <div class="fld" style="left:80px;top:629px">ALL FIELDS</div>
    <div class="bar" style="left:604px;top:627px"><b style="width:100%"></b><span style="color:#fff">23</span></div>
    <!--/TABLE-->
  </div>
</div>
<div id="bottomline"></div><div id="bottomstrip"></div>
</body>
</html>
